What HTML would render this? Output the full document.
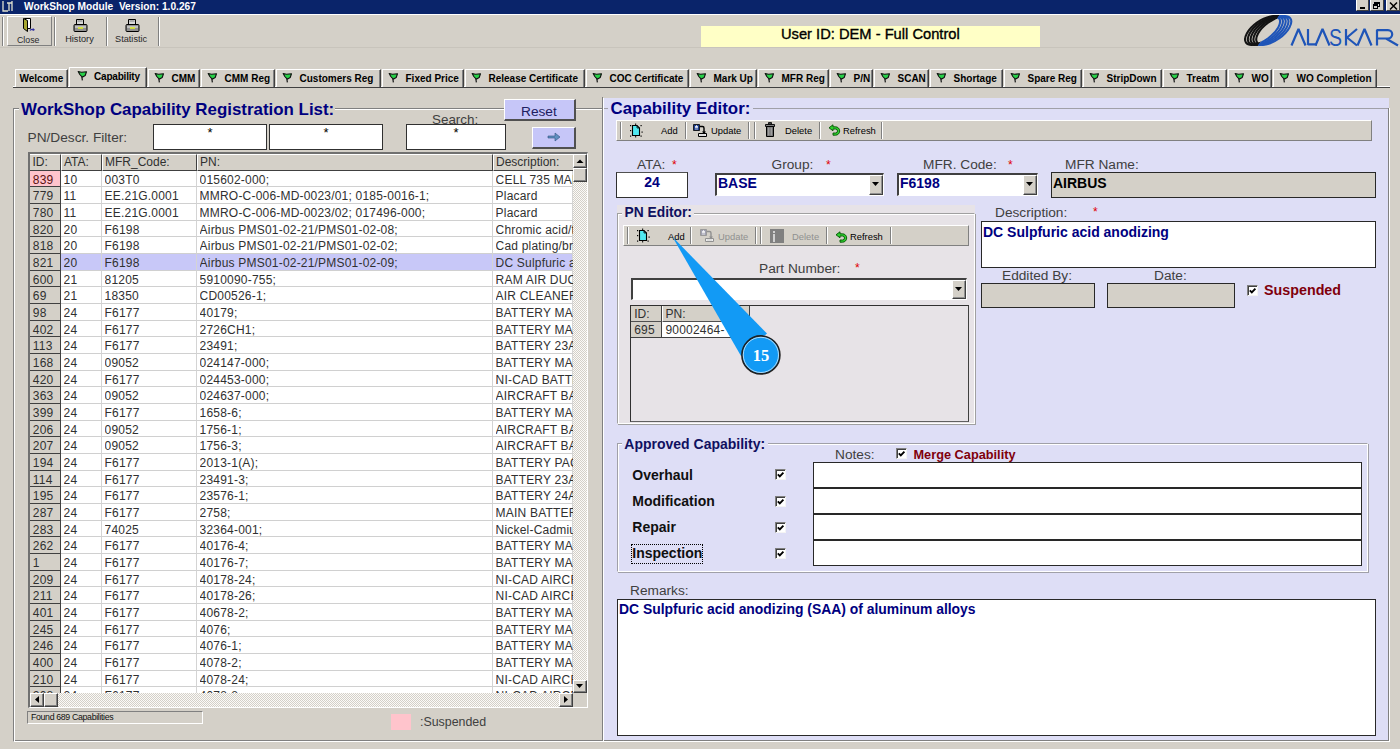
<!DOCTYPE html>
<html><head><meta charset="utf-8"><style>
html,body{margin:0;padding:0;width:1400px;height:749px;overflow:hidden;background:#d4d0c8;font-family:"Liberation Sans",sans-serif;}
.t{position:absolute;white-space:nowrap;line-height:normal;}
svg{overflow:visible}
</style></head><body>
<div style="position:absolute;left:0px;top:0px;width:1400px;height:14px;box-sizing:border-box;background:#0a246a"></div>
<div class="t" style="left:24px;top:0.77px;font-size:10.2px;font-weight:bold;color:#fff;">WorkShop Module&nbsp; Version: 1.0.267</div>
<svg style="position:absolute;left:1px;top:0px" width="14" height="13" viewBox="0 0 14 13"><path d="M2 1v10h5M8 3v8M6 3h5M11 1v10" fill="none" stroke="#e0e0d0" stroke-width="1.3"/></svg>
<div style="position:absolute;left:1356px;top:0px;width:13px;height:11px;box-sizing:border-box;background:#d4d0c8;border-right:1px solid #404040;border-bottom:1px solid #404040;border-left:1px solid #fff"></div>
<div style="position:absolute;left:1370px;top:0px;width:14px;height:11px;box-sizing:border-box;background:#d4d0c8;border-right:1px solid #404040;border-bottom:1px solid #404040;border-left:1px solid #fff"></div>
<div style="position:absolute;left:1386px;top:0px;width:14px;height:11px;box-sizing:border-box;background:#d4d0c8;border-right:1px solid #404040;border-bottom:1px solid #404040;border-left:1px solid #fff"></div>
<div style="position:absolute;left:1360px;top:7px;width:5px;height:2px;box-sizing:border-box;background:#000"></div>
<div style="position:absolute;left:1374px;top:2px;width:6px;height:5px;box-sizing:border-box;border:1px solid #000;border-top-width:2px"></div>
<div style="position:absolute;left:1373px;top:4px;width:5px;height:5px;box-sizing:border-box;background:#d4d0c8;border:1px solid #000;border-top-width:2px"></div>
<svg style="position:absolute;left:1389px;top:2px" width="9" height="8" viewBox="0 0 9 8"><path d="M1 0.5l7 7M8 0.5l-7 7" stroke="#000" stroke-width="1.5"/></svg>
<div style="position:absolute;left:0px;top:14px;width:1400px;height:34px;box-sizing:border-box;background:#d4d0c8;border-top:1px solid #fff;border-bottom:1px solid #808080"></div>
<div style="position:absolute;left:0px;top:47px;width:1400px;height:1px;box-sizing:border-box;background:#c8c4bc"></div>
<div style="position:absolute;left:2px;top:17px;width:2px;height:29px;box-sizing:border-box;border-left:1px solid #808080;border-right:1px solid #fff"></div>
<div style="position:absolute;left:7px;top:16px;width:45px;height:30px;box-sizing:border-box;border-top:1px solid #fff;border-left:1px solid #fff;border-right:1px solid #808080;border-bottom:1px solid #808080"></div>
<div style="position:absolute;left:54px;top:17px;width:2px;height:29px;box-sizing:border-box;border-left:1px solid #808080;border-right:1px solid #fff"></div>
<div style="position:absolute;left:106px;top:17px;width:2px;height:29px;box-sizing:border-box;border-left:1px solid #808080;border-right:1px solid #fff"></div>
<div style="position:absolute;left:158px;top:17px;width:2px;height:29px;box-sizing:border-box;border-left:1px solid #808080;border-right:1px solid #fff"></div>
<div class="t" style="left:17px;top:34.64px;font-size:8.8px;color:#282828;">Close</div>
<div class="t" style="left:65.2px;top:34.27px;font-size:9.2px;color:#282828;">History</div>
<div class="t" style="left:115px;top:34.27px;font-size:9.2px;color:#282828;">Statistic</div>
<svg style="position:absolute;left:20px;top:16px" width="18" height="18" viewBox="0 0 18 18"><path d="M4.5 2.5h6v10h-6z" fill="#fff" stroke="#000"/><path d="M3.5 2.5l4 2v11l-4-3z" fill="#a8a830" stroke="#000"/><path d="M10 14.5c1-1.5 3-1.5 4-0.5" fill="none" stroke="#3030a0" stroke-width="1.3"/><path d="M13 12l2 2-2.5 1z" fill="#3030a0"/></svg>
<svg style="position:absolute;left:73px;top:19px" width="15" height="13" viewBox="0 0 15 13"><path d="M3.5 0.5h7v5h-7z" fill="#d8d8d8" stroke="#000"/><path d="M4.5 2h5" stroke="#808080"/><path d="M1 6.5q0-1 1-1h11q1 0 1 1v5q0 1-1 1h-11q-1 0-1-1z" fill="#909090" stroke="#000"/><path d="M2 8h11" stroke="#f0f0f0"/><path d="M5 9h5" stroke="#e0f020" stroke-width="1.5"/></svg>
<svg style="position:absolute;left:125px;top:19px" width="15" height="13" viewBox="0 0 15 13"><path d="M3.5 0.5h7v5h-7z" fill="#d8d8d8" stroke="#000"/><path d="M4.5 2h5" stroke="#808080"/><path d="M1 6.5q0-1 1-1h11q1 0 1 1v5q0 1-1 1h-11q-1 0-1-1z" fill="#909090" stroke="#000"/><path d="M2 8h11" stroke="#f0f0f0"/><path d="M5 9h5" stroke="#e0f020" stroke-width="1.5"/></svg>
<div style="position:absolute;left:701px;top:26px;width:339px;height:21px;box-sizing:border-box;background:#ffffc6"></div>
<div class="t" style="left:781px;top:25.70px;font-size:14.7px;color:#000;-webkit-text-stroke:0.35px #000">User ID: DEM - Full Control</div>
<svg style="position:absolute;left:0;top:0" width="1400" height="60" viewBox="0 0 1400 60">
<defs><clipPath id="cb"><path d="M1253.5 52 L1288.2 3 L1300 3 L1300 60 Z"/></clipPath><clipPath id="ck"><path d="M1253.5 52 L1288.2 3 L1230 0 L1230 60 Z"/></clipPath></defs>
<g fill="none" stroke-width="2.1">
<g stroke="#141414" clip-path="url(#ck)"><ellipse cx="1262.5" cy="30.5" rx="20.5" ry="9.6" transform="rotate(-36 1262.5 30.4)"/><ellipse cx="1265.3" cy="30.5" rx="20.5" ry="9.6" transform="rotate(-36 1265.3 30.4)"/><ellipse cx="1268.1" cy="30.5" rx="20.5" ry="9.6" transform="rotate(-36 1268.1 30.4)"/><ellipse cx="1270.9" cy="30.5" rx="20.5" ry="9.6" transform="rotate(-36 1270.9 30.4)"/><ellipse cx="1273.7" cy="30.5" rx="20.5" ry="9.6" transform="rotate(-36 1273.7 30.4)"/></g>
<g stroke="#1f55b8" clip-path="url(#cb)"><ellipse cx="1262.5" cy="30.5" rx="20.5" ry="9.6" transform="rotate(-36 1262.5 30.4)"/><ellipse cx="1265.3" cy="30.5" rx="20.5" ry="9.6" transform="rotate(-36 1265.3 30.4)"/><ellipse cx="1268.1" cy="30.5" rx="20.5" ry="9.6" transform="rotate(-36 1268.1 30.4)"/><ellipse cx="1270.9" cy="30.5" rx="20.5" ry="9.6" transform="rotate(-36 1270.9 30.4)"/><ellipse cx="1273.7" cy="30.5" rx="20.5" ry="9.6" transform="rotate(-36 1273.7 30.4)"/></g>
</g>
<g fill="none" stroke="#1f55b8" stroke-width="2.2" stroke-linejoin="bevel">
<path d="M1291.5 45.5 L1298.5 29 L1305.5 45.5"/>
<path d="M1308 29 V44.4 H1317"/>
<path d="M1315.5 45.5 L1322.5 29 L1329.5 45.5"/>
<path d="M1346 29 V45.5 M1357 29 L1347 37.5 L1357 45.5"/>
<path d="M1357.5 45.5 L1364.5 29 L1371.5 45.5"/>
<path d="M1377 45.5 V30.1 H1388 A4.2 4.2 0 0 1 1388 38.5 H1377 M1386 38.5 L1398 45.5"/>
</g>
<text x="1329" y="45.5" font-family="Liberation Sans" font-size="23" fill="#1f55b8" textLength="13" lengthAdjust="spacingAndGlyphs">S</text>
</svg>
<div style="position:absolute;left:13px;top:86px;width:1377px;height:2px;box-sizing:border-box;border-top:1px solid #fff;border-bottom:1px solid #404040"></div>
<div style="position:absolute;left:15px;top:69px;width:53px;height:18px;box-sizing:border-box;background:#d4d0c8;border-top:1px solid #fff;border-left:1px solid #fff;border-right:1px solid #404040;box-shadow:inset -1px 0 #808080"></div>
<div class="t" style="left:19.5px;top:72.85px;font-size:10px;font-weight:bold;color:#000;">Welcome</div>
<div style="position:absolute;left:69px;top:67px;width:78px;height:20px;box-sizing:border-box;background:#d4d0c8;border-top:1px solid #fff;border-left:1px solid #fff;border-right:1px solid #404040;box-shadow:inset -1px 0 #808080"></div>
<svg style="position:absolute;left:77px;top:70px" width="11" height="11" viewBox="0 0 11 11"><path d="M1.2 1.5L4.5 2.2 9.5 1.8 8.2 5.5 5.2 7.2 2.8 4.5z" fill="#28d048" stroke="#101010" stroke-width="1.1" stroke-linejoin="round"/><path d="M4.8 6.5l0.6 3.8" stroke="#202020" stroke-width="1.3"/></svg>
<div class="t" style="left:94px;top:71.45px;font-size:10px;font-weight:bold;color:#000;letter-spacing:-0.2px">Capability</div>
<div style="position:absolute;left:148px;top:69px;width:52px;height:18px;box-sizing:border-box;background:#d4d0c8;border-top:1px solid #fff;border-left:1px solid #fff;border-right:1px solid #404040;box-shadow:inset -1px 0 #808080"></div>
<svg style="position:absolute;left:154px;top:72px" width="11" height="11" viewBox="0 0 11 11"><path d="M1.2 1.5L4.5 2.2 9.5 1.8 8.2 5.5 5.2 7.2 2.8 4.5z" fill="#28d048" stroke="#101010" stroke-width="1.1" stroke-linejoin="round"/><path d="M4.8 6.5l0.6 3.8" stroke="#202020" stroke-width="1.3"/></svg>
<div class="t" style="left:171.5px;top:72.85px;font-size:10px;font-weight:bold;color:#000;">CMM</div>
<div style="position:absolute;left:201px;top:69px;width:74px;height:18px;box-sizing:border-box;background:#d4d0c8;border-top:1px solid #fff;border-left:1px solid #fff;border-right:1px solid #404040;box-shadow:inset -1px 0 #808080"></div>
<svg style="position:absolute;left:207px;top:72px" width="11" height="11" viewBox="0 0 11 11"><path d="M1.2 1.5L4.5 2.2 9.5 1.8 8.2 5.5 5.2 7.2 2.8 4.5z" fill="#28d048" stroke="#101010" stroke-width="1.1" stroke-linejoin="round"/><path d="M4.8 6.5l0.6 3.8" stroke="#202020" stroke-width="1.3"/></svg>
<div class="t" style="left:224.5px;top:72.85px;font-size:10px;font-weight:bold;color:#000;">CMM Reg</div>
<div style="position:absolute;left:276px;top:69px;width:105px;height:18px;box-sizing:border-box;background:#d4d0c8;border-top:1px solid #fff;border-left:1px solid #fff;border-right:1px solid #404040;box-shadow:inset -1px 0 #808080"></div>
<svg style="position:absolute;left:282px;top:72px" width="11" height="11" viewBox="0 0 11 11"><path d="M1.2 1.5L4.5 2.2 9.5 1.8 8.2 5.5 5.2 7.2 2.8 4.5z" fill="#28d048" stroke="#101010" stroke-width="1.1" stroke-linejoin="round"/><path d="M4.8 6.5l0.6 3.8" stroke="#202020" stroke-width="1.3"/></svg>
<div class="t" style="left:299.5px;top:72.85px;font-size:10px;font-weight:bold;color:#000;">Customers Reg</div>
<div style="position:absolute;left:382px;top:69px;width:82px;height:18px;box-sizing:border-box;background:#d4d0c8;border-top:1px solid #fff;border-left:1px solid #fff;border-right:1px solid #404040;box-shadow:inset -1px 0 #808080"></div>
<svg style="position:absolute;left:388px;top:72px" width="11" height="11" viewBox="0 0 11 11"><path d="M1.2 1.5L4.5 2.2 9.5 1.8 8.2 5.5 5.2 7.2 2.8 4.5z" fill="#28d048" stroke="#101010" stroke-width="1.1" stroke-linejoin="round"/><path d="M4.8 6.5l0.6 3.8" stroke="#202020" stroke-width="1.3"/></svg>
<div class="t" style="left:405.5px;top:72.85px;font-size:10px;font-weight:bold;color:#000;">Fixed Price</div>
<div style="position:absolute;left:465px;top:69px;width:120px;height:18px;box-sizing:border-box;background:#d4d0c8;border-top:1px solid #fff;border-left:1px solid #fff;border-right:1px solid #404040;box-shadow:inset -1px 0 #808080"></div>
<svg style="position:absolute;left:471px;top:72px" width="11" height="11" viewBox="0 0 11 11"><path d="M1.2 1.5L4.5 2.2 9.5 1.8 8.2 5.5 5.2 7.2 2.8 4.5z" fill="#28d048" stroke="#101010" stroke-width="1.1" stroke-linejoin="round"/><path d="M4.8 6.5l0.6 3.8" stroke="#202020" stroke-width="1.3"/></svg>
<div class="t" style="left:488.5px;top:72.85px;font-size:10px;font-weight:bold;color:#000;">Release Certificate</div>
<div style="position:absolute;left:586px;top:69px;width:103px;height:18px;box-sizing:border-box;background:#d4d0c8;border-top:1px solid #fff;border-left:1px solid #fff;border-right:1px solid #404040;box-shadow:inset -1px 0 #808080"></div>
<svg style="position:absolute;left:592px;top:72px" width="11" height="11" viewBox="0 0 11 11"><path d="M1.2 1.5L4.5 2.2 9.5 1.8 8.2 5.5 5.2 7.2 2.8 4.5z" fill="#28d048" stroke="#101010" stroke-width="1.1" stroke-linejoin="round"/><path d="M4.8 6.5l0.6 3.8" stroke="#202020" stroke-width="1.3"/></svg>
<div class="t" style="left:609.5px;top:72.85px;font-size:10px;font-weight:bold;color:#000;">COC Certificate</div>
<div style="position:absolute;left:690px;top:69px;width:67px;height:18px;box-sizing:border-box;background:#d4d0c8;border-top:1px solid #fff;border-left:1px solid #fff;border-right:1px solid #404040;box-shadow:inset -1px 0 #808080"></div>
<svg style="position:absolute;left:696px;top:72px" width="11" height="11" viewBox="0 0 11 11"><path d="M1.2 1.5L4.5 2.2 9.5 1.8 8.2 5.5 5.2 7.2 2.8 4.5z" fill="#28d048" stroke="#101010" stroke-width="1.1" stroke-linejoin="round"/><path d="M4.8 6.5l0.6 3.8" stroke="#202020" stroke-width="1.3"/></svg>
<div class="t" style="left:713.5px;top:72.85px;font-size:10px;font-weight:bold;color:#000;">Mark Up</div>
<div style="position:absolute;left:758px;top:69px;width:71px;height:18px;box-sizing:border-box;background:#d4d0c8;border-top:1px solid #fff;border-left:1px solid #fff;border-right:1px solid #404040;box-shadow:inset -1px 0 #808080"></div>
<svg style="position:absolute;left:764px;top:72px" width="11" height="11" viewBox="0 0 11 11"><path d="M1.2 1.5L4.5 2.2 9.5 1.8 8.2 5.5 5.2 7.2 2.8 4.5z" fill="#28d048" stroke="#101010" stroke-width="1.1" stroke-linejoin="round"/><path d="M4.8 6.5l0.6 3.8" stroke="#202020" stroke-width="1.3"/></svg>
<div class="t" style="left:781.5px;top:72.85px;font-size:10px;font-weight:bold;color:#000;">MFR Reg</div>
<div style="position:absolute;left:830px;top:69px;width:43px;height:18px;box-sizing:border-box;background:#d4d0c8;border-top:1px solid #fff;border-left:1px solid #fff;border-right:1px solid #404040;box-shadow:inset -1px 0 #808080"></div>
<svg style="position:absolute;left:836px;top:72px" width="11" height="11" viewBox="0 0 11 11"><path d="M1.2 1.5L4.5 2.2 9.5 1.8 8.2 5.5 5.2 7.2 2.8 4.5z" fill="#28d048" stroke="#101010" stroke-width="1.1" stroke-linejoin="round"/><path d="M4.8 6.5l0.6 3.8" stroke="#202020" stroke-width="1.3"/></svg>
<div class="t" style="left:853.5px;top:72.85px;font-size:10px;font-weight:bold;color:#000;">P/N</div>
<div style="position:absolute;left:874px;top:69px;width:55px;height:18px;box-sizing:border-box;background:#d4d0c8;border-top:1px solid #fff;border-left:1px solid #fff;border-right:1px solid #404040;box-shadow:inset -1px 0 #808080"></div>
<svg style="position:absolute;left:880px;top:72px" width="11" height="11" viewBox="0 0 11 11"><path d="M1.2 1.5L4.5 2.2 9.5 1.8 8.2 5.5 5.2 7.2 2.8 4.5z" fill="#28d048" stroke="#101010" stroke-width="1.1" stroke-linejoin="round"/><path d="M4.8 6.5l0.6 3.8" stroke="#202020" stroke-width="1.3"/></svg>
<div class="t" style="left:897.5px;top:72.85px;font-size:10px;font-weight:bold;color:#000;">SCAN</div>
<div style="position:absolute;left:930px;top:69px;width:73px;height:18px;box-sizing:border-box;background:#d4d0c8;border-top:1px solid #fff;border-left:1px solid #fff;border-right:1px solid #404040;box-shadow:inset -1px 0 #808080"></div>
<svg style="position:absolute;left:936px;top:72px" width="11" height="11" viewBox="0 0 11 11"><path d="M1.2 1.5L4.5 2.2 9.5 1.8 8.2 5.5 5.2 7.2 2.8 4.5z" fill="#28d048" stroke="#101010" stroke-width="1.1" stroke-linejoin="round"/><path d="M4.8 6.5l0.6 3.8" stroke="#202020" stroke-width="1.3"/></svg>
<div class="t" style="left:953.5px;top:72.85px;font-size:10px;font-weight:bold;color:#000;">Shortage</div>
<div style="position:absolute;left:1004px;top:69px;width:78px;height:18px;box-sizing:border-box;background:#d4d0c8;border-top:1px solid #fff;border-left:1px solid #fff;border-right:1px solid #404040;box-shadow:inset -1px 0 #808080"></div>
<svg style="position:absolute;left:1010px;top:72px" width="11" height="11" viewBox="0 0 11 11"><path d="M1.2 1.5L4.5 2.2 9.5 1.8 8.2 5.5 5.2 7.2 2.8 4.5z" fill="#28d048" stroke="#101010" stroke-width="1.1" stroke-linejoin="round"/><path d="M4.8 6.5l0.6 3.8" stroke="#202020" stroke-width="1.3"/></svg>
<div class="t" style="left:1027.5px;top:72.85px;font-size:10px;font-weight:bold;color:#000;">Spare Reg</div>
<div style="position:absolute;left:1083px;top:69px;width:79px;height:18px;box-sizing:border-box;background:#d4d0c8;border-top:1px solid #fff;border-left:1px solid #fff;border-right:1px solid #404040;box-shadow:inset -1px 0 #808080"></div>
<svg style="position:absolute;left:1089px;top:72px" width="11" height="11" viewBox="0 0 11 11"><path d="M1.2 1.5L4.5 2.2 9.5 1.8 8.2 5.5 5.2 7.2 2.8 4.5z" fill="#28d048" stroke="#101010" stroke-width="1.1" stroke-linejoin="round"/><path d="M4.8 6.5l0.6 3.8" stroke="#202020" stroke-width="1.3"/></svg>
<div class="t" style="left:1106.5px;top:72.85px;font-size:10px;font-weight:bold;color:#000;">StripDown</div>
<div style="position:absolute;left:1163px;top:69px;width:64px;height:18px;box-sizing:border-box;background:#d4d0c8;border-top:1px solid #fff;border-left:1px solid #fff;border-right:1px solid #404040;box-shadow:inset -1px 0 #808080"></div>
<svg style="position:absolute;left:1169px;top:72px" width="11" height="11" viewBox="0 0 11 11"><path d="M1.2 1.5L4.5 2.2 9.5 1.8 8.2 5.5 5.2 7.2 2.8 4.5z" fill="#28d048" stroke="#101010" stroke-width="1.1" stroke-linejoin="round"/><path d="M4.8 6.5l0.6 3.8" stroke="#202020" stroke-width="1.3"/></svg>
<div class="t" style="left:1186.5px;top:72.85px;font-size:10px;font-weight:bold;color:#000;">Treatm</div>
<div style="position:absolute;left:1228px;top:69px;width:44px;height:18px;box-sizing:border-box;background:#d4d0c8;border-top:1px solid #fff;border-left:1px solid #fff;border-right:1px solid #404040;box-shadow:inset -1px 0 #808080"></div>
<svg style="position:absolute;left:1234px;top:72px" width="11" height="11" viewBox="0 0 11 11"><path d="M1.2 1.5L4.5 2.2 9.5 1.8 8.2 5.5 5.2 7.2 2.8 4.5z" fill="#28d048" stroke="#101010" stroke-width="1.1" stroke-linejoin="round"/><path d="M4.8 6.5l0.6 3.8" stroke="#202020" stroke-width="1.3"/></svg>
<div class="t" style="left:1251.5px;top:72.85px;font-size:10px;font-weight:bold;color:#000;">WO</div>
<div style="position:absolute;left:1273px;top:69px;width:104px;height:18px;box-sizing:border-box;background:#d4d0c8;border-top:1px solid #fff;border-left:1px solid #fff;border-right:1px solid #404040;box-shadow:inset -1px 0 #808080"></div>
<svg style="position:absolute;left:1279px;top:72px" width="11" height="11" viewBox="0 0 11 11"><path d="M1.2 1.5L4.5 2.2 9.5 1.8 8.2 5.5 5.2 7.2 2.8 4.5z" fill="#28d048" stroke="#101010" stroke-width="1.1" stroke-linejoin="round"/><path d="M4.8 6.5l0.6 3.8" stroke="#202020" stroke-width="1.3"/></svg>
<div class="t" style="left:1296.5px;top:72.85px;font-size:10px;font-weight:bold;color:#000;">WO Completion</div>
<div style="position:absolute;left:13px;top:108px;width:591px;height:634px;box-sizing:border-box;border-top:1px solid #808080;border-left:1px solid #808080;border-right:1px solid #fff;border-bottom:1px solid #fff;box-shadow:inset 1px 1px #fff, inset -1px -1px #808080"></div>
<div style="position:absolute;left:19px;top:100px;width:316px;height:16px;box-sizing:border-box;background:#d4d0c8"></div>
<div class="t" style="left:21.1px;top:99.51px;font-size:16.9px;font-weight:bold;color:#000080;">WorkShop Capability Registration List:</div>
<div class="t" style="left:27.5px;top:129.60px;font-size:13.7px;color:#404040;">PN/Descr. Filter:</div>
<div class="t" style="left:432px;top:111.87px;font-size:13.4px;color:#404040;">Search:</div>
<div style="position:absolute;left:153px;top:124px;width:114px;height:26px;box-sizing:border-box;background:#fff;border:1px solid #303030"></div>
<div class="t" style="left:153px;width:114px;top:125px;text-align:center;font-size:13px;color:#000">*</div>
<div style="position:absolute;left:269px;top:124px;width:114px;height:26px;box-sizing:border-box;background:#fff;border:1px solid #303030"></div>
<div class="t" style="left:269px;width:114px;top:125px;text-align:center;font-size:13px;color:#000">*</div>
<div style="position:absolute;left:406px;top:124px;width:100px;height:26px;box-sizing:border-box;background:#fff;border:1px solid #303030"></div>
<div class="t" style="left:406px;width:100px;top:125px;text-align:center;font-size:13px;color:#000">*</div>
<div style="position:absolute;left:504px;top:99px;width:72px;height:22px;box-sizing:border-box;background:#c6c6f8;border-top:1px solid #fff;border-left:1px solid #fff;border-right:2px solid #505050;border-bottom:2px solid #505050"></div>
<div class="t" style="left:521px;top:103.60px;font-size:13.7px;color:#202060;">Reset</div>
<div style="position:absolute;left:532px;top:127px;width:44px;height:22px;box-sizing:border-box;background:#c6c6f8;border-top:1px solid #fff;border-left:1px solid #fff;border-right:2px solid #505050;border-bottom:2px solid #505050"></div>
<svg style="position:absolute;left:547px;top:132px" width="14" height="10" viewBox="0 0 14 10"><path d="M1 4h7V1l5 4-5 4V6H1z" fill="#6090c0" stroke="#305080" stroke-width="0.6"/></svg>
<div style="position:absolute;left:28px;top:152px;width:560px;height:556px;box-sizing:border-box;background:#d4d0c8;border-top:2px solid #707070;border-left:2px solid #707070;border-right:1px solid #fff;border-bottom:1px solid #fff"></div>
<div style="position:absolute;left:30px;top:154px;width:543px;height:539px;overflow:hidden;background:#fff">
<div style="position:absolute;left:0px;top:0px;width:543px;height:17px;box-sizing:border-box;background:#d4d0c8"></div>
<div style="position:absolute;left:0px;top:0px;width:31px;height:17px;box-sizing:border-box;border-top:1px solid #fff;border-right:1px solid #404040;border-bottom:1px solid #404040"></div>
<div class="t" style="left:2.5px;top:1.44px;font-size:12px;color:#303030;">ID:</div>
<div style="position:absolute;left:31px;top:0px;width:41px;height:17px;box-sizing:border-box;border-top:1px solid #fff;border-left:1px solid #fff;border-bottom:1px solid #404040;border-right:1px solid #404040"></div>
<div class="t" style="left:34px;top:1.44px;font-size:12px;color:#303030;">ATA:</div>
<div style="position:absolute;left:72px;top:0px;width:95px;height:17px;box-sizing:border-box;border-top:1px solid #fff;border-left:1px solid #fff;border-bottom:1px solid #404040;border-right:1px solid #404040"></div>
<div class="t" style="left:75px;top:1.44px;font-size:12px;color:#303030;">MFR_Code:</div>
<div style="position:absolute;left:167px;top:0px;width:296px;height:17px;box-sizing:border-box;border-top:1px solid #fff;border-left:1px solid #fff;border-bottom:1px solid #404040;border-right:1px solid #404040"></div>
<div class="t" style="left:170px;top:1.44px;font-size:12px;color:#303030;">PN:</div>
<div style="position:absolute;left:463px;top:0px;width:80px;height:17px;box-sizing:border-box;border-top:1px solid #fff;border-left:1px solid #fff;border-bottom:1px solid #404040"></div>
<div class="t" style="left:466px;top:1.44px;font-size:12px;color:#303030;">Description:</div>
<div style="position:absolute;left:31px;top:17px;width:512px;height:16px;box-sizing:border-box;background:#fff"></div>
<div style="position:absolute;left:0px;top:17px;width:31px;height:16px;box-sizing:border-box;background:#ffc4cc;border-bottom:1px solid #404040;border-right:1px solid #404040"></div>
<div style="position:absolute;left:31px;top:17px;width:41px;height:16px;box-sizing:border-box;border-right:1px solid #d4d4d4;border-bottom:1px solid #d0d0d0"></div>
<div style="position:absolute;left:72px;top:17px;width:95px;height:16px;box-sizing:border-box;border-right:1px solid #d4d4d4;border-bottom:1px solid #d0d0d0"></div>
<div style="position:absolute;left:167px;top:17px;width:296px;height:16px;box-sizing:border-box;border-right:1px solid #d4d4d4;border-bottom:1px solid #d0d0d0"></div>
<div style="position:absolute;left:463px;top:17px;width:80px;height:16px;box-sizing:border-box;border-right:1px solid #d4d4d4;border-bottom:1px solid #d0d0d0"></div>
<div class="t" style="left:2.799999999999997px;top:18.64px;font-size:12px;color:#5a1010;letter-spacing:0.2px">839</div>
<div class="t" style="left:33.6px;top:18.64px;font-size:12px;color:#303030;width:38px;overflow:hidden;letter-spacing:0.2px">10</div>
<div class="t" style="left:74.6px;top:18.64px;font-size:12px;color:#303030;width:92px;overflow:hidden;letter-spacing:0.2px">003T0</div>
<div class="t" style="left:169.6px;top:18.64px;font-size:12px;color:#303030;width:293px;overflow:hidden;letter-spacing:0.2px">015602-000;</div>
<div class="t" style="left:465.6px;top:18.64px;font-size:12px;color:#303030;width:77px;overflow:hidden;letter-spacing:0.2px">CELL 735 MAI</div>
<div style="position:absolute;left:31px;top:33px;width:512px;height:17px;box-sizing:border-box;background:#fff"></div>
<div style="position:absolute;left:0px;top:33px;width:31px;height:17px;box-sizing:border-box;background:#d4d0c8;border-bottom:1px solid #404040;border-right:1px solid #404040"></div>
<div style="position:absolute;left:31px;top:33px;width:41px;height:17px;box-sizing:border-box;border-right:1px solid #d4d4d4;border-bottom:1px solid #d0d0d0"></div>
<div style="position:absolute;left:72px;top:33px;width:95px;height:17px;box-sizing:border-box;border-right:1px solid #d4d4d4;border-bottom:1px solid #d0d0d0"></div>
<div style="position:absolute;left:167px;top:33px;width:296px;height:17px;box-sizing:border-box;border-right:1px solid #d4d4d4;border-bottom:1px solid #d0d0d0"></div>
<div style="position:absolute;left:463px;top:33px;width:80px;height:17px;box-sizing:border-box;border-right:1px solid #d4d4d4;border-bottom:1px solid #d0d0d0"></div>
<div class="t" style="left:2.799999999999997px;top:34.64px;font-size:12px;color:#303030;letter-spacing:0.2px">779</div>
<div class="t" style="left:33.6px;top:34.64px;font-size:12px;color:#303030;width:38px;overflow:hidden;letter-spacing:0.2px">11</div>
<div class="t" style="left:74.6px;top:34.64px;font-size:12px;color:#303030;width:92px;overflow:hidden;letter-spacing:0.2px">EE.21G.0001</div>
<div class="t" style="left:169.6px;top:34.64px;font-size:12px;color:#303030;width:293px;overflow:hidden;letter-spacing:0.2px">MMRO-C-006-MD-0023/01; 0185-0016-1;</div>
<div class="t" style="left:465.6px;top:34.64px;font-size:12px;color:#303030;width:77px;overflow:hidden;letter-spacing:0.2px">Placard</div>
<div style="position:absolute;left:31px;top:50px;width:512px;height:17px;box-sizing:border-box;background:#fff"></div>
<div style="position:absolute;left:0px;top:50px;width:31px;height:17px;box-sizing:border-box;background:#d4d0c8;border-bottom:1px solid #404040;border-right:1px solid #404040"></div>
<div style="position:absolute;left:31px;top:50px;width:41px;height:17px;box-sizing:border-box;border-right:1px solid #d4d4d4;border-bottom:1px solid #d0d0d0"></div>
<div style="position:absolute;left:72px;top:50px;width:95px;height:17px;box-sizing:border-box;border-right:1px solid #d4d4d4;border-bottom:1px solid #d0d0d0"></div>
<div style="position:absolute;left:167px;top:50px;width:296px;height:17px;box-sizing:border-box;border-right:1px solid #d4d4d4;border-bottom:1px solid #d0d0d0"></div>
<div style="position:absolute;left:463px;top:50px;width:80px;height:17px;box-sizing:border-box;border-right:1px solid #d4d4d4;border-bottom:1px solid #d0d0d0"></div>
<div class="t" style="left:2.799999999999997px;top:51.64px;font-size:12px;color:#303030;letter-spacing:0.2px">780</div>
<div class="t" style="left:33.6px;top:51.64px;font-size:12px;color:#303030;width:38px;overflow:hidden;letter-spacing:0.2px">11</div>
<div class="t" style="left:74.6px;top:51.64px;font-size:12px;color:#303030;width:92px;overflow:hidden;letter-spacing:0.2px">EE.21G.0001</div>
<div class="t" style="left:169.6px;top:51.64px;font-size:12px;color:#303030;width:293px;overflow:hidden;letter-spacing:0.2px">MMRO-C-006-MD-0023/02; 017496-000;</div>
<div class="t" style="left:465.6px;top:51.64px;font-size:12px;color:#303030;width:77px;overflow:hidden;letter-spacing:0.2px">Placard</div>
<div style="position:absolute;left:31px;top:67px;width:512px;height:16px;box-sizing:border-box;background:#fff"></div>
<div style="position:absolute;left:0px;top:67px;width:31px;height:16px;box-sizing:border-box;background:#d4d0c8;border-bottom:1px solid #404040;border-right:1px solid #404040"></div>
<div style="position:absolute;left:31px;top:67px;width:41px;height:16px;box-sizing:border-box;border-right:1px solid #d4d4d4;border-bottom:1px solid #d0d0d0"></div>
<div style="position:absolute;left:72px;top:67px;width:95px;height:16px;box-sizing:border-box;border-right:1px solid #d4d4d4;border-bottom:1px solid #d0d0d0"></div>
<div style="position:absolute;left:167px;top:67px;width:296px;height:16px;box-sizing:border-box;border-right:1px solid #d4d4d4;border-bottom:1px solid #d0d0d0"></div>
<div style="position:absolute;left:463px;top:67px;width:80px;height:16px;box-sizing:border-box;border-right:1px solid #d4d4d4;border-bottom:1px solid #d0d0d0"></div>
<div class="t" style="left:2.799999999999997px;top:68.64px;font-size:12px;color:#303030;letter-spacing:0.2px">820</div>
<div class="t" style="left:33.6px;top:68.64px;font-size:12px;color:#303030;width:38px;overflow:hidden;letter-spacing:0.2px">20</div>
<div class="t" style="left:74.6px;top:68.64px;font-size:12px;color:#303030;width:92px;overflow:hidden;letter-spacing:0.2px">F6198</div>
<div class="t" style="left:169.6px;top:68.64px;font-size:12px;color:#303030;width:293px;overflow:hidden;letter-spacing:0.2px">Airbus PMS01-02-21/PMS01-02-08;</div>
<div class="t" style="left:465.6px;top:68.64px;font-size:12px;color:#303030;width:77px;overflow:hidden;letter-spacing:0.2px">Chromic acid/t</div>
<div style="position:absolute;left:31px;top:83px;width:512px;height:17px;box-sizing:border-box;background:#fff"></div>
<div style="position:absolute;left:0px;top:83px;width:31px;height:17px;box-sizing:border-box;background:#d4d0c8;border-bottom:1px solid #404040;border-right:1px solid #404040"></div>
<div style="position:absolute;left:31px;top:83px;width:41px;height:17px;box-sizing:border-box;border-right:1px solid #d4d4d4;border-bottom:1px solid #d0d0d0"></div>
<div style="position:absolute;left:72px;top:83px;width:95px;height:17px;box-sizing:border-box;border-right:1px solid #d4d4d4;border-bottom:1px solid #d0d0d0"></div>
<div style="position:absolute;left:167px;top:83px;width:296px;height:17px;box-sizing:border-box;border-right:1px solid #d4d4d4;border-bottom:1px solid #d0d0d0"></div>
<div style="position:absolute;left:463px;top:83px;width:80px;height:17px;box-sizing:border-box;border-right:1px solid #d4d4d4;border-bottom:1px solid #d0d0d0"></div>
<div class="t" style="left:2.799999999999997px;top:84.64px;font-size:12px;color:#303030;letter-spacing:0.2px">818</div>
<div class="t" style="left:33.6px;top:84.64px;font-size:12px;color:#303030;width:38px;overflow:hidden;letter-spacing:0.2px">20</div>
<div class="t" style="left:74.6px;top:84.64px;font-size:12px;color:#303030;width:92px;overflow:hidden;letter-spacing:0.2px">F6198</div>
<div class="t" style="left:169.6px;top:84.64px;font-size:12px;color:#303030;width:293px;overflow:hidden;letter-spacing:0.2px">Airbus PMS01-02-21/PMS01-02-02;</div>
<div class="t" style="left:465.6px;top:84.64px;font-size:12px;color:#303030;width:77px;overflow:hidden;letter-spacing:0.2px">Cad plating/br</div>
<div style="position:absolute;left:31px;top:100px;width:512px;height:17px;box-sizing:border-box;background:#c8c8f8"></div>
<div style="position:absolute;left:0px;top:100px;width:31px;height:17px;box-sizing:border-box;background:#d4d0c8;border-bottom:1px solid #404040;border-right:1px solid #404040"></div>
<div style="position:absolute;left:31px;top:100px;width:41px;height:17px;box-sizing:border-box;border-right:1px solid #d4d4d4;border-bottom:1px solid #d0d0d0"></div>
<div style="position:absolute;left:72px;top:100px;width:95px;height:17px;box-sizing:border-box;border-right:1px solid #d4d4d4;border-bottom:1px solid #d0d0d0"></div>
<div style="position:absolute;left:167px;top:100px;width:296px;height:17px;box-sizing:border-box;border-right:1px solid #d4d4d4;border-bottom:1px solid #d0d0d0"></div>
<div style="position:absolute;left:463px;top:100px;width:80px;height:17px;box-sizing:border-box;border-right:1px solid #d4d4d4;border-bottom:1px solid #d0d0d0"></div>
<div class="t" style="left:2.799999999999997px;top:101.64px;font-size:12px;color:#303030;letter-spacing:0.2px">821</div>
<div class="t" style="left:33.6px;top:101.64px;font-size:12px;color:#303030;width:38px;overflow:hidden;letter-spacing:0.2px">20</div>
<div class="t" style="left:74.6px;top:101.64px;font-size:12px;color:#303030;width:92px;overflow:hidden;letter-spacing:0.2px">F6198</div>
<div class="t" style="left:169.6px;top:101.64px;font-size:12px;color:#303030;width:293px;overflow:hidden;letter-spacing:0.2px">Airbus PMS01-02-21/PMS01-02-09;</div>
<div class="t" style="left:465.6px;top:101.64px;font-size:12px;color:#303030;width:77px;overflow:hidden;letter-spacing:0.2px">DC Sulpfuric a</div>
<div style="position:absolute;left:31px;top:117px;width:512px;height:16px;box-sizing:border-box;background:#fff"></div>
<div style="position:absolute;left:0px;top:117px;width:31px;height:16px;box-sizing:border-box;background:#d4d0c8;border-bottom:1px solid #404040;border-right:1px solid #404040"></div>
<div style="position:absolute;left:31px;top:117px;width:41px;height:16px;box-sizing:border-box;border-right:1px solid #d4d4d4;border-bottom:1px solid #d0d0d0"></div>
<div style="position:absolute;left:72px;top:117px;width:95px;height:16px;box-sizing:border-box;border-right:1px solid #d4d4d4;border-bottom:1px solid #d0d0d0"></div>
<div style="position:absolute;left:167px;top:117px;width:296px;height:16px;box-sizing:border-box;border-right:1px solid #d4d4d4;border-bottom:1px solid #d0d0d0"></div>
<div style="position:absolute;left:463px;top:117px;width:80px;height:16px;box-sizing:border-box;border-right:1px solid #d4d4d4;border-bottom:1px solid #d0d0d0"></div>
<div class="t" style="left:2.799999999999997px;top:118.64px;font-size:12px;color:#303030;letter-spacing:0.2px">600</div>
<div class="t" style="left:33.6px;top:118.64px;font-size:12px;color:#303030;width:38px;overflow:hidden;letter-spacing:0.2px">21</div>
<div class="t" style="left:74.6px;top:118.64px;font-size:12px;color:#303030;width:92px;overflow:hidden;letter-spacing:0.2px">81205</div>
<div class="t" style="left:169.6px;top:118.64px;font-size:12px;color:#303030;width:293px;overflow:hidden;letter-spacing:0.2px">5910090-755;</div>
<div class="t" style="left:465.6px;top:118.64px;font-size:12px;color:#303030;width:77px;overflow:hidden;letter-spacing:0.2px">RAM AIR DUC</div>
<div style="position:absolute;left:31px;top:133px;width:512px;height:17px;box-sizing:border-box;background:#fff"></div>
<div style="position:absolute;left:0px;top:133px;width:31px;height:17px;box-sizing:border-box;background:#d4d0c8;border-bottom:1px solid #404040;border-right:1px solid #404040"></div>
<div style="position:absolute;left:31px;top:133px;width:41px;height:17px;box-sizing:border-box;border-right:1px solid #d4d4d4;border-bottom:1px solid #d0d0d0"></div>
<div style="position:absolute;left:72px;top:133px;width:95px;height:17px;box-sizing:border-box;border-right:1px solid #d4d4d4;border-bottom:1px solid #d0d0d0"></div>
<div style="position:absolute;left:167px;top:133px;width:296px;height:17px;box-sizing:border-box;border-right:1px solid #d4d4d4;border-bottom:1px solid #d0d0d0"></div>
<div style="position:absolute;left:463px;top:133px;width:80px;height:17px;box-sizing:border-box;border-right:1px solid #d4d4d4;border-bottom:1px solid #d0d0d0"></div>
<div class="t" style="left:2.799999999999997px;top:134.64px;font-size:12px;color:#303030;letter-spacing:0.2px">69</div>
<div class="t" style="left:33.6px;top:134.64px;font-size:12px;color:#303030;width:38px;overflow:hidden;letter-spacing:0.2px">21</div>
<div class="t" style="left:74.6px;top:134.64px;font-size:12px;color:#303030;width:92px;overflow:hidden;letter-spacing:0.2px">18350</div>
<div class="t" style="left:169.6px;top:134.64px;font-size:12px;color:#303030;width:293px;overflow:hidden;letter-spacing:0.2px">CD00526-1;</div>
<div class="t" style="left:465.6px;top:134.64px;font-size:12px;color:#303030;width:77px;overflow:hidden;letter-spacing:0.2px">AIR CLEANER</div>
<div style="position:absolute;left:31px;top:150px;width:512px;height:17px;box-sizing:border-box;background:#fff"></div>
<div style="position:absolute;left:0px;top:150px;width:31px;height:17px;box-sizing:border-box;background:#d4d0c8;border-bottom:1px solid #404040;border-right:1px solid #404040"></div>
<div style="position:absolute;left:31px;top:150px;width:41px;height:17px;box-sizing:border-box;border-right:1px solid #d4d4d4;border-bottom:1px solid #d0d0d0"></div>
<div style="position:absolute;left:72px;top:150px;width:95px;height:17px;box-sizing:border-box;border-right:1px solid #d4d4d4;border-bottom:1px solid #d0d0d0"></div>
<div style="position:absolute;left:167px;top:150px;width:296px;height:17px;box-sizing:border-box;border-right:1px solid #d4d4d4;border-bottom:1px solid #d0d0d0"></div>
<div style="position:absolute;left:463px;top:150px;width:80px;height:17px;box-sizing:border-box;border-right:1px solid #d4d4d4;border-bottom:1px solid #d0d0d0"></div>
<div class="t" style="left:2.799999999999997px;top:151.64px;font-size:12px;color:#303030;letter-spacing:0.2px">98</div>
<div class="t" style="left:33.6px;top:151.64px;font-size:12px;color:#303030;width:38px;overflow:hidden;letter-spacing:0.2px">24</div>
<div class="t" style="left:74.6px;top:151.64px;font-size:12px;color:#303030;width:92px;overflow:hidden;letter-spacing:0.2px">F6177</div>
<div class="t" style="left:169.6px;top:151.64px;font-size:12px;color:#303030;width:293px;overflow:hidden;letter-spacing:0.2px">40179;</div>
<div class="t" style="left:465.6px;top:151.64px;font-size:12px;color:#303030;width:77px;overflow:hidden;letter-spacing:0.2px">BATTERY MAI</div>
<div style="position:absolute;left:31px;top:167px;width:512px;height:16px;box-sizing:border-box;background:#fff"></div>
<div style="position:absolute;left:0px;top:167px;width:31px;height:16px;box-sizing:border-box;background:#d4d0c8;border-bottom:1px solid #404040;border-right:1px solid #404040"></div>
<div style="position:absolute;left:31px;top:167px;width:41px;height:16px;box-sizing:border-box;border-right:1px solid #d4d4d4;border-bottom:1px solid #d0d0d0"></div>
<div style="position:absolute;left:72px;top:167px;width:95px;height:16px;box-sizing:border-box;border-right:1px solid #d4d4d4;border-bottom:1px solid #d0d0d0"></div>
<div style="position:absolute;left:167px;top:167px;width:296px;height:16px;box-sizing:border-box;border-right:1px solid #d4d4d4;border-bottom:1px solid #d0d0d0"></div>
<div style="position:absolute;left:463px;top:167px;width:80px;height:16px;box-sizing:border-box;border-right:1px solid #d4d4d4;border-bottom:1px solid #d0d0d0"></div>
<div class="t" style="left:2.799999999999997px;top:168.64px;font-size:12px;color:#303030;letter-spacing:0.2px">402</div>
<div class="t" style="left:33.6px;top:168.64px;font-size:12px;color:#303030;width:38px;overflow:hidden;letter-spacing:0.2px">24</div>
<div class="t" style="left:74.6px;top:168.64px;font-size:12px;color:#303030;width:92px;overflow:hidden;letter-spacing:0.2px">F6177</div>
<div class="t" style="left:169.6px;top:168.64px;font-size:12px;color:#303030;width:293px;overflow:hidden;letter-spacing:0.2px">2726CH1;</div>
<div class="t" style="left:465.6px;top:168.64px;font-size:12px;color:#303030;width:77px;overflow:hidden;letter-spacing:0.2px">BATTERY MAI</div>
<div style="position:absolute;left:31px;top:183px;width:512px;height:17px;box-sizing:border-box;background:#fff"></div>
<div style="position:absolute;left:0px;top:183px;width:31px;height:17px;box-sizing:border-box;background:#d4d0c8;border-bottom:1px solid #404040;border-right:1px solid #404040"></div>
<div style="position:absolute;left:31px;top:183px;width:41px;height:17px;box-sizing:border-box;border-right:1px solid #d4d4d4;border-bottom:1px solid #d0d0d0"></div>
<div style="position:absolute;left:72px;top:183px;width:95px;height:17px;box-sizing:border-box;border-right:1px solid #d4d4d4;border-bottom:1px solid #d0d0d0"></div>
<div style="position:absolute;left:167px;top:183px;width:296px;height:17px;box-sizing:border-box;border-right:1px solid #d4d4d4;border-bottom:1px solid #d0d0d0"></div>
<div style="position:absolute;left:463px;top:183px;width:80px;height:17px;box-sizing:border-box;border-right:1px solid #d4d4d4;border-bottom:1px solid #d0d0d0"></div>
<div class="t" style="left:2.799999999999997px;top:184.64px;font-size:12px;color:#303030;letter-spacing:0.2px">113</div>
<div class="t" style="left:33.6px;top:184.64px;font-size:12px;color:#303030;width:38px;overflow:hidden;letter-spacing:0.2px">24</div>
<div class="t" style="left:74.6px;top:184.64px;font-size:12px;color:#303030;width:92px;overflow:hidden;letter-spacing:0.2px">F6177</div>
<div class="t" style="left:169.6px;top:184.64px;font-size:12px;color:#303030;width:293px;overflow:hidden;letter-spacing:0.2px">23491;</div>
<div class="t" style="left:465.6px;top:184.64px;font-size:12px;color:#303030;width:77px;overflow:hidden;letter-spacing:0.2px">BATTERY 23A</div>
<div style="position:absolute;left:31px;top:200px;width:512px;height:17px;box-sizing:border-box;background:#fff"></div>
<div style="position:absolute;left:0px;top:200px;width:31px;height:17px;box-sizing:border-box;background:#d4d0c8;border-bottom:1px solid #404040;border-right:1px solid #404040"></div>
<div style="position:absolute;left:31px;top:200px;width:41px;height:17px;box-sizing:border-box;border-right:1px solid #d4d4d4;border-bottom:1px solid #d0d0d0"></div>
<div style="position:absolute;left:72px;top:200px;width:95px;height:17px;box-sizing:border-box;border-right:1px solid #d4d4d4;border-bottom:1px solid #d0d0d0"></div>
<div style="position:absolute;left:167px;top:200px;width:296px;height:17px;box-sizing:border-box;border-right:1px solid #d4d4d4;border-bottom:1px solid #d0d0d0"></div>
<div style="position:absolute;left:463px;top:200px;width:80px;height:17px;box-sizing:border-box;border-right:1px solid #d4d4d4;border-bottom:1px solid #d0d0d0"></div>
<div class="t" style="left:2.799999999999997px;top:201.64px;font-size:12px;color:#303030;letter-spacing:0.2px">168</div>
<div class="t" style="left:33.6px;top:201.64px;font-size:12px;color:#303030;width:38px;overflow:hidden;letter-spacing:0.2px">24</div>
<div class="t" style="left:74.6px;top:201.64px;font-size:12px;color:#303030;width:92px;overflow:hidden;letter-spacing:0.2px">09052</div>
<div class="t" style="left:169.6px;top:201.64px;font-size:12px;color:#303030;width:293px;overflow:hidden;letter-spacing:0.2px">024147-000;</div>
<div class="t" style="left:465.6px;top:201.64px;font-size:12px;color:#303030;width:77px;overflow:hidden;letter-spacing:0.2px">BATTERY MAI</div>
<div style="position:absolute;left:31px;top:217px;width:512px;height:16px;box-sizing:border-box;background:#fff"></div>
<div style="position:absolute;left:0px;top:217px;width:31px;height:16px;box-sizing:border-box;background:#d4d0c8;border-bottom:1px solid #404040;border-right:1px solid #404040"></div>
<div style="position:absolute;left:31px;top:217px;width:41px;height:16px;box-sizing:border-box;border-right:1px solid #d4d4d4;border-bottom:1px solid #d0d0d0"></div>
<div style="position:absolute;left:72px;top:217px;width:95px;height:16px;box-sizing:border-box;border-right:1px solid #d4d4d4;border-bottom:1px solid #d0d0d0"></div>
<div style="position:absolute;left:167px;top:217px;width:296px;height:16px;box-sizing:border-box;border-right:1px solid #d4d4d4;border-bottom:1px solid #d0d0d0"></div>
<div style="position:absolute;left:463px;top:217px;width:80px;height:16px;box-sizing:border-box;border-right:1px solid #d4d4d4;border-bottom:1px solid #d0d0d0"></div>
<div class="t" style="left:2.799999999999997px;top:218.64px;font-size:12px;color:#303030;letter-spacing:0.2px">420</div>
<div class="t" style="left:33.6px;top:218.64px;font-size:12px;color:#303030;width:38px;overflow:hidden;letter-spacing:0.2px">24</div>
<div class="t" style="left:74.6px;top:218.64px;font-size:12px;color:#303030;width:92px;overflow:hidden;letter-spacing:0.2px">F6177</div>
<div class="t" style="left:169.6px;top:218.64px;font-size:12px;color:#303030;width:293px;overflow:hidden;letter-spacing:0.2px">024453-000;</div>
<div class="t" style="left:465.6px;top:218.64px;font-size:12px;color:#303030;width:77px;overflow:hidden;letter-spacing:0.2px">NI-CAD BATTE</div>
<div style="position:absolute;left:31px;top:233px;width:512px;height:17px;box-sizing:border-box;background:#fff"></div>
<div style="position:absolute;left:0px;top:233px;width:31px;height:17px;box-sizing:border-box;background:#d4d0c8;border-bottom:1px solid #404040;border-right:1px solid #404040"></div>
<div style="position:absolute;left:31px;top:233px;width:41px;height:17px;box-sizing:border-box;border-right:1px solid #d4d4d4;border-bottom:1px solid #d0d0d0"></div>
<div style="position:absolute;left:72px;top:233px;width:95px;height:17px;box-sizing:border-box;border-right:1px solid #d4d4d4;border-bottom:1px solid #d0d0d0"></div>
<div style="position:absolute;left:167px;top:233px;width:296px;height:17px;box-sizing:border-box;border-right:1px solid #d4d4d4;border-bottom:1px solid #d0d0d0"></div>
<div style="position:absolute;left:463px;top:233px;width:80px;height:17px;box-sizing:border-box;border-right:1px solid #d4d4d4;border-bottom:1px solid #d0d0d0"></div>
<div class="t" style="left:2.799999999999997px;top:234.64px;font-size:12px;color:#303030;letter-spacing:0.2px">363</div>
<div class="t" style="left:33.6px;top:234.64px;font-size:12px;color:#303030;width:38px;overflow:hidden;letter-spacing:0.2px">24</div>
<div class="t" style="left:74.6px;top:234.64px;font-size:12px;color:#303030;width:92px;overflow:hidden;letter-spacing:0.2px">09052</div>
<div class="t" style="left:169.6px;top:234.64px;font-size:12px;color:#303030;width:293px;overflow:hidden;letter-spacing:0.2px">024637-000;</div>
<div class="t" style="left:465.6px;top:234.64px;font-size:12px;color:#303030;width:77px;overflow:hidden;letter-spacing:0.2px">AIRCRAFT BA</div>
<div style="position:absolute;left:31px;top:250px;width:512px;height:17px;box-sizing:border-box;background:#fff"></div>
<div style="position:absolute;left:0px;top:250px;width:31px;height:17px;box-sizing:border-box;background:#d4d0c8;border-bottom:1px solid #404040;border-right:1px solid #404040"></div>
<div style="position:absolute;left:31px;top:250px;width:41px;height:17px;box-sizing:border-box;border-right:1px solid #d4d4d4;border-bottom:1px solid #d0d0d0"></div>
<div style="position:absolute;left:72px;top:250px;width:95px;height:17px;box-sizing:border-box;border-right:1px solid #d4d4d4;border-bottom:1px solid #d0d0d0"></div>
<div style="position:absolute;left:167px;top:250px;width:296px;height:17px;box-sizing:border-box;border-right:1px solid #d4d4d4;border-bottom:1px solid #d0d0d0"></div>
<div style="position:absolute;left:463px;top:250px;width:80px;height:17px;box-sizing:border-box;border-right:1px solid #d4d4d4;border-bottom:1px solid #d0d0d0"></div>
<div class="t" style="left:2.799999999999997px;top:251.64px;font-size:12px;color:#303030;letter-spacing:0.2px">399</div>
<div class="t" style="left:33.6px;top:251.64px;font-size:12px;color:#303030;width:38px;overflow:hidden;letter-spacing:0.2px">24</div>
<div class="t" style="left:74.6px;top:251.64px;font-size:12px;color:#303030;width:92px;overflow:hidden;letter-spacing:0.2px">F6177</div>
<div class="t" style="left:169.6px;top:251.64px;font-size:12px;color:#303030;width:293px;overflow:hidden;letter-spacing:0.2px">1658-6;</div>
<div class="t" style="left:465.6px;top:251.64px;font-size:12px;color:#303030;width:77px;overflow:hidden;letter-spacing:0.2px">BATTERY MAI</div>
<div style="position:absolute;left:31px;top:267px;width:512px;height:16px;box-sizing:border-box;background:#fff"></div>
<div style="position:absolute;left:0px;top:267px;width:31px;height:16px;box-sizing:border-box;background:#d4d0c8;border-bottom:1px solid #404040;border-right:1px solid #404040"></div>
<div style="position:absolute;left:31px;top:267px;width:41px;height:16px;box-sizing:border-box;border-right:1px solid #d4d4d4;border-bottom:1px solid #d0d0d0"></div>
<div style="position:absolute;left:72px;top:267px;width:95px;height:16px;box-sizing:border-box;border-right:1px solid #d4d4d4;border-bottom:1px solid #d0d0d0"></div>
<div style="position:absolute;left:167px;top:267px;width:296px;height:16px;box-sizing:border-box;border-right:1px solid #d4d4d4;border-bottom:1px solid #d0d0d0"></div>
<div style="position:absolute;left:463px;top:267px;width:80px;height:16px;box-sizing:border-box;border-right:1px solid #d4d4d4;border-bottom:1px solid #d0d0d0"></div>
<div class="t" style="left:2.799999999999997px;top:268.64px;font-size:12px;color:#303030;letter-spacing:0.2px">206</div>
<div class="t" style="left:33.6px;top:268.64px;font-size:12px;color:#303030;width:38px;overflow:hidden;letter-spacing:0.2px">24</div>
<div class="t" style="left:74.6px;top:268.64px;font-size:12px;color:#303030;width:92px;overflow:hidden;letter-spacing:0.2px">09052</div>
<div class="t" style="left:169.6px;top:268.64px;font-size:12px;color:#303030;width:293px;overflow:hidden;letter-spacing:0.2px">1756-1;</div>
<div class="t" style="left:465.6px;top:268.64px;font-size:12px;color:#303030;width:77px;overflow:hidden;letter-spacing:0.2px">AIRCRAFT BA</div>
<div style="position:absolute;left:31px;top:283px;width:512px;height:17px;box-sizing:border-box;background:#fff"></div>
<div style="position:absolute;left:0px;top:283px;width:31px;height:17px;box-sizing:border-box;background:#d4d0c8;border-bottom:1px solid #404040;border-right:1px solid #404040"></div>
<div style="position:absolute;left:31px;top:283px;width:41px;height:17px;box-sizing:border-box;border-right:1px solid #d4d4d4;border-bottom:1px solid #d0d0d0"></div>
<div style="position:absolute;left:72px;top:283px;width:95px;height:17px;box-sizing:border-box;border-right:1px solid #d4d4d4;border-bottom:1px solid #d0d0d0"></div>
<div style="position:absolute;left:167px;top:283px;width:296px;height:17px;box-sizing:border-box;border-right:1px solid #d4d4d4;border-bottom:1px solid #d0d0d0"></div>
<div style="position:absolute;left:463px;top:283px;width:80px;height:17px;box-sizing:border-box;border-right:1px solid #d4d4d4;border-bottom:1px solid #d0d0d0"></div>
<div class="t" style="left:2.799999999999997px;top:284.64px;font-size:12px;color:#303030;letter-spacing:0.2px">207</div>
<div class="t" style="left:33.6px;top:284.64px;font-size:12px;color:#303030;width:38px;overflow:hidden;letter-spacing:0.2px">24</div>
<div class="t" style="left:74.6px;top:284.64px;font-size:12px;color:#303030;width:92px;overflow:hidden;letter-spacing:0.2px">09052</div>
<div class="t" style="left:169.6px;top:284.64px;font-size:12px;color:#303030;width:293px;overflow:hidden;letter-spacing:0.2px">1756-3;</div>
<div class="t" style="left:465.6px;top:284.64px;font-size:12px;color:#303030;width:77px;overflow:hidden;letter-spacing:0.2px">AIRCRAFT BA</div>
<div style="position:absolute;left:31px;top:300px;width:512px;height:17px;box-sizing:border-box;background:#fff"></div>
<div style="position:absolute;left:0px;top:300px;width:31px;height:17px;box-sizing:border-box;background:#d4d0c8;border-bottom:1px solid #404040;border-right:1px solid #404040"></div>
<div style="position:absolute;left:31px;top:300px;width:41px;height:17px;box-sizing:border-box;border-right:1px solid #d4d4d4;border-bottom:1px solid #d0d0d0"></div>
<div style="position:absolute;left:72px;top:300px;width:95px;height:17px;box-sizing:border-box;border-right:1px solid #d4d4d4;border-bottom:1px solid #d0d0d0"></div>
<div style="position:absolute;left:167px;top:300px;width:296px;height:17px;box-sizing:border-box;border-right:1px solid #d4d4d4;border-bottom:1px solid #d0d0d0"></div>
<div style="position:absolute;left:463px;top:300px;width:80px;height:17px;box-sizing:border-box;border-right:1px solid #d4d4d4;border-bottom:1px solid #d0d0d0"></div>
<div class="t" style="left:2.799999999999997px;top:301.64px;font-size:12px;color:#303030;letter-spacing:0.2px">194</div>
<div class="t" style="left:33.6px;top:301.64px;font-size:12px;color:#303030;width:38px;overflow:hidden;letter-spacing:0.2px">24</div>
<div class="t" style="left:74.6px;top:301.64px;font-size:12px;color:#303030;width:92px;overflow:hidden;letter-spacing:0.2px">F6177</div>
<div class="t" style="left:169.6px;top:301.64px;font-size:12px;color:#303030;width:293px;overflow:hidden;letter-spacing:0.2px">2013-1(A);</div>
<div class="t" style="left:465.6px;top:301.64px;font-size:12px;color:#303030;width:77px;overflow:hidden;letter-spacing:0.2px">BATTERY PAC</div>
<div style="position:absolute;left:31px;top:317px;width:512px;height:16px;box-sizing:border-box;background:#fff"></div>
<div style="position:absolute;left:0px;top:317px;width:31px;height:16px;box-sizing:border-box;background:#d4d0c8;border-bottom:1px solid #404040;border-right:1px solid #404040"></div>
<div style="position:absolute;left:31px;top:317px;width:41px;height:16px;box-sizing:border-box;border-right:1px solid #d4d4d4;border-bottom:1px solid #d0d0d0"></div>
<div style="position:absolute;left:72px;top:317px;width:95px;height:16px;box-sizing:border-box;border-right:1px solid #d4d4d4;border-bottom:1px solid #d0d0d0"></div>
<div style="position:absolute;left:167px;top:317px;width:296px;height:16px;box-sizing:border-box;border-right:1px solid #d4d4d4;border-bottom:1px solid #d0d0d0"></div>
<div style="position:absolute;left:463px;top:317px;width:80px;height:16px;box-sizing:border-box;border-right:1px solid #d4d4d4;border-bottom:1px solid #d0d0d0"></div>
<div class="t" style="left:2.799999999999997px;top:318.64px;font-size:12px;color:#303030;letter-spacing:0.2px">114</div>
<div class="t" style="left:33.6px;top:318.64px;font-size:12px;color:#303030;width:38px;overflow:hidden;letter-spacing:0.2px">24</div>
<div class="t" style="left:74.6px;top:318.64px;font-size:12px;color:#303030;width:92px;overflow:hidden;letter-spacing:0.2px">F6177</div>
<div class="t" style="left:169.6px;top:318.64px;font-size:12px;color:#303030;width:293px;overflow:hidden;letter-spacing:0.2px">23491-3;</div>
<div class="t" style="left:465.6px;top:318.64px;font-size:12px;color:#303030;width:77px;overflow:hidden;letter-spacing:0.2px">BATTERY 23A</div>
<div style="position:absolute;left:31px;top:333px;width:512px;height:17px;box-sizing:border-box;background:#fff"></div>
<div style="position:absolute;left:0px;top:333px;width:31px;height:17px;box-sizing:border-box;background:#d4d0c8;border-bottom:1px solid #404040;border-right:1px solid #404040"></div>
<div style="position:absolute;left:31px;top:333px;width:41px;height:17px;box-sizing:border-box;border-right:1px solid #d4d4d4;border-bottom:1px solid #d0d0d0"></div>
<div style="position:absolute;left:72px;top:333px;width:95px;height:17px;box-sizing:border-box;border-right:1px solid #d4d4d4;border-bottom:1px solid #d0d0d0"></div>
<div style="position:absolute;left:167px;top:333px;width:296px;height:17px;box-sizing:border-box;border-right:1px solid #d4d4d4;border-bottom:1px solid #d0d0d0"></div>
<div style="position:absolute;left:463px;top:333px;width:80px;height:17px;box-sizing:border-box;border-right:1px solid #d4d4d4;border-bottom:1px solid #d0d0d0"></div>
<div class="t" style="left:2.799999999999997px;top:334.64px;font-size:12px;color:#303030;letter-spacing:0.2px">195</div>
<div class="t" style="left:33.6px;top:334.64px;font-size:12px;color:#303030;width:38px;overflow:hidden;letter-spacing:0.2px">24</div>
<div class="t" style="left:74.6px;top:334.64px;font-size:12px;color:#303030;width:92px;overflow:hidden;letter-spacing:0.2px">F6177</div>
<div class="t" style="left:169.6px;top:334.64px;font-size:12px;color:#303030;width:293px;overflow:hidden;letter-spacing:0.2px">23576-1;</div>
<div class="t" style="left:465.6px;top:334.64px;font-size:12px;color:#303030;width:77px;overflow:hidden;letter-spacing:0.2px">BATTERY 24A</div>
<div style="position:absolute;left:31px;top:350px;width:512px;height:17px;box-sizing:border-box;background:#fff"></div>
<div style="position:absolute;left:0px;top:350px;width:31px;height:17px;box-sizing:border-box;background:#d4d0c8;border-bottom:1px solid #404040;border-right:1px solid #404040"></div>
<div style="position:absolute;left:31px;top:350px;width:41px;height:17px;box-sizing:border-box;border-right:1px solid #d4d4d4;border-bottom:1px solid #d0d0d0"></div>
<div style="position:absolute;left:72px;top:350px;width:95px;height:17px;box-sizing:border-box;border-right:1px solid #d4d4d4;border-bottom:1px solid #d0d0d0"></div>
<div style="position:absolute;left:167px;top:350px;width:296px;height:17px;box-sizing:border-box;border-right:1px solid #d4d4d4;border-bottom:1px solid #d0d0d0"></div>
<div style="position:absolute;left:463px;top:350px;width:80px;height:17px;box-sizing:border-box;border-right:1px solid #d4d4d4;border-bottom:1px solid #d0d0d0"></div>
<div class="t" style="left:2.799999999999997px;top:351.64px;font-size:12px;color:#303030;letter-spacing:0.2px">287</div>
<div class="t" style="left:33.6px;top:351.64px;font-size:12px;color:#303030;width:38px;overflow:hidden;letter-spacing:0.2px">24</div>
<div class="t" style="left:74.6px;top:351.64px;font-size:12px;color:#303030;width:92px;overflow:hidden;letter-spacing:0.2px">F6177</div>
<div class="t" style="left:169.6px;top:351.64px;font-size:12px;color:#303030;width:293px;overflow:hidden;letter-spacing:0.2px">2758;</div>
<div class="t" style="left:465.6px;top:351.64px;font-size:12px;color:#303030;width:77px;overflow:hidden;letter-spacing:0.2px">MAIN BATTER</div>
<div style="position:absolute;left:31px;top:367px;width:512px;height:16px;box-sizing:border-box;background:#fff"></div>
<div style="position:absolute;left:0px;top:367px;width:31px;height:16px;box-sizing:border-box;background:#d4d0c8;border-bottom:1px solid #404040;border-right:1px solid #404040"></div>
<div style="position:absolute;left:31px;top:367px;width:41px;height:16px;box-sizing:border-box;border-right:1px solid #d4d4d4;border-bottom:1px solid #d0d0d0"></div>
<div style="position:absolute;left:72px;top:367px;width:95px;height:16px;box-sizing:border-box;border-right:1px solid #d4d4d4;border-bottom:1px solid #d0d0d0"></div>
<div style="position:absolute;left:167px;top:367px;width:296px;height:16px;box-sizing:border-box;border-right:1px solid #d4d4d4;border-bottom:1px solid #d0d0d0"></div>
<div style="position:absolute;left:463px;top:367px;width:80px;height:16px;box-sizing:border-box;border-right:1px solid #d4d4d4;border-bottom:1px solid #d0d0d0"></div>
<div class="t" style="left:2.799999999999997px;top:368.64px;font-size:12px;color:#303030;letter-spacing:0.2px">283</div>
<div class="t" style="left:33.6px;top:368.64px;font-size:12px;color:#303030;width:38px;overflow:hidden;letter-spacing:0.2px">24</div>
<div class="t" style="left:74.6px;top:368.64px;font-size:12px;color:#303030;width:92px;overflow:hidden;letter-spacing:0.2px">74025</div>
<div class="t" style="left:169.6px;top:368.64px;font-size:12px;color:#303030;width:293px;overflow:hidden;letter-spacing:0.2px">32364-001;</div>
<div class="t" style="left:465.6px;top:368.64px;font-size:12px;color:#303030;width:77px;overflow:hidden;letter-spacing:0.2px">Nickel-Cadmiu</div>
<div style="position:absolute;left:31px;top:383px;width:512px;height:17px;box-sizing:border-box;background:#fff"></div>
<div style="position:absolute;left:0px;top:383px;width:31px;height:17px;box-sizing:border-box;background:#d4d0c8;border-bottom:1px solid #404040;border-right:1px solid #404040"></div>
<div style="position:absolute;left:31px;top:383px;width:41px;height:17px;box-sizing:border-box;border-right:1px solid #d4d4d4;border-bottom:1px solid #d0d0d0"></div>
<div style="position:absolute;left:72px;top:383px;width:95px;height:17px;box-sizing:border-box;border-right:1px solid #d4d4d4;border-bottom:1px solid #d0d0d0"></div>
<div style="position:absolute;left:167px;top:383px;width:296px;height:17px;box-sizing:border-box;border-right:1px solid #d4d4d4;border-bottom:1px solid #d0d0d0"></div>
<div style="position:absolute;left:463px;top:383px;width:80px;height:17px;box-sizing:border-box;border-right:1px solid #d4d4d4;border-bottom:1px solid #d0d0d0"></div>
<div class="t" style="left:2.799999999999997px;top:384.64px;font-size:12px;color:#303030;letter-spacing:0.2px">262</div>
<div class="t" style="left:33.6px;top:384.64px;font-size:12px;color:#303030;width:38px;overflow:hidden;letter-spacing:0.2px">24</div>
<div class="t" style="left:74.6px;top:384.64px;font-size:12px;color:#303030;width:92px;overflow:hidden;letter-spacing:0.2px">F6177</div>
<div class="t" style="left:169.6px;top:384.64px;font-size:12px;color:#303030;width:293px;overflow:hidden;letter-spacing:0.2px">40176-4;</div>
<div class="t" style="left:465.6px;top:384.64px;font-size:12px;color:#303030;width:77px;overflow:hidden;letter-spacing:0.2px">BATTERY MAI</div>
<div style="position:absolute;left:31px;top:400px;width:512px;height:17px;box-sizing:border-box;background:#fff"></div>
<div style="position:absolute;left:0px;top:400px;width:31px;height:17px;box-sizing:border-box;background:#d4d0c8;border-bottom:1px solid #404040;border-right:1px solid #404040"></div>
<div style="position:absolute;left:31px;top:400px;width:41px;height:17px;box-sizing:border-box;border-right:1px solid #d4d4d4;border-bottom:1px solid #d0d0d0"></div>
<div style="position:absolute;left:72px;top:400px;width:95px;height:17px;box-sizing:border-box;border-right:1px solid #d4d4d4;border-bottom:1px solid #d0d0d0"></div>
<div style="position:absolute;left:167px;top:400px;width:296px;height:17px;box-sizing:border-box;border-right:1px solid #d4d4d4;border-bottom:1px solid #d0d0d0"></div>
<div style="position:absolute;left:463px;top:400px;width:80px;height:17px;box-sizing:border-box;border-right:1px solid #d4d4d4;border-bottom:1px solid #d0d0d0"></div>
<div class="t" style="left:2.799999999999997px;top:401.64px;font-size:12px;color:#303030;letter-spacing:0.2px">1</div>
<div class="t" style="left:33.6px;top:401.64px;font-size:12px;color:#303030;width:38px;overflow:hidden;letter-spacing:0.2px">24</div>
<div class="t" style="left:74.6px;top:401.64px;font-size:12px;color:#303030;width:92px;overflow:hidden;letter-spacing:0.2px">F6177</div>
<div class="t" style="left:169.6px;top:401.64px;font-size:12px;color:#303030;width:293px;overflow:hidden;letter-spacing:0.2px">40176-7;</div>
<div class="t" style="left:465.6px;top:401.64px;font-size:12px;color:#303030;width:77px;overflow:hidden;letter-spacing:0.2px">BATTERY MAI</div>
<div style="position:absolute;left:31px;top:417px;width:512px;height:16px;box-sizing:border-box;background:#fff"></div>
<div style="position:absolute;left:0px;top:417px;width:31px;height:16px;box-sizing:border-box;background:#d4d0c8;border-bottom:1px solid #404040;border-right:1px solid #404040"></div>
<div style="position:absolute;left:31px;top:417px;width:41px;height:16px;box-sizing:border-box;border-right:1px solid #d4d4d4;border-bottom:1px solid #d0d0d0"></div>
<div style="position:absolute;left:72px;top:417px;width:95px;height:16px;box-sizing:border-box;border-right:1px solid #d4d4d4;border-bottom:1px solid #d0d0d0"></div>
<div style="position:absolute;left:167px;top:417px;width:296px;height:16px;box-sizing:border-box;border-right:1px solid #d4d4d4;border-bottom:1px solid #d0d0d0"></div>
<div style="position:absolute;left:463px;top:417px;width:80px;height:16px;box-sizing:border-box;border-right:1px solid #d4d4d4;border-bottom:1px solid #d0d0d0"></div>
<div class="t" style="left:2.799999999999997px;top:418.64px;font-size:12px;color:#303030;letter-spacing:0.2px">209</div>
<div class="t" style="left:33.6px;top:418.64px;font-size:12px;color:#303030;width:38px;overflow:hidden;letter-spacing:0.2px">24</div>
<div class="t" style="left:74.6px;top:418.64px;font-size:12px;color:#303030;width:92px;overflow:hidden;letter-spacing:0.2px">F6177</div>
<div class="t" style="left:169.6px;top:418.64px;font-size:12px;color:#303030;width:293px;overflow:hidden;letter-spacing:0.2px">40178-24;</div>
<div class="t" style="left:465.6px;top:418.64px;font-size:12px;color:#303030;width:77px;overflow:hidden;letter-spacing:0.2px">NI-CAD AIRCR</div>
<div style="position:absolute;left:31px;top:433px;width:512px;height:17px;box-sizing:border-box;background:#fff"></div>
<div style="position:absolute;left:0px;top:433px;width:31px;height:17px;box-sizing:border-box;background:#d4d0c8;border-bottom:1px solid #404040;border-right:1px solid #404040"></div>
<div style="position:absolute;left:31px;top:433px;width:41px;height:17px;box-sizing:border-box;border-right:1px solid #d4d4d4;border-bottom:1px solid #d0d0d0"></div>
<div style="position:absolute;left:72px;top:433px;width:95px;height:17px;box-sizing:border-box;border-right:1px solid #d4d4d4;border-bottom:1px solid #d0d0d0"></div>
<div style="position:absolute;left:167px;top:433px;width:296px;height:17px;box-sizing:border-box;border-right:1px solid #d4d4d4;border-bottom:1px solid #d0d0d0"></div>
<div style="position:absolute;left:463px;top:433px;width:80px;height:17px;box-sizing:border-box;border-right:1px solid #d4d4d4;border-bottom:1px solid #d0d0d0"></div>
<div class="t" style="left:2.799999999999997px;top:434.64px;font-size:12px;color:#303030;letter-spacing:0.2px">211</div>
<div class="t" style="left:33.6px;top:434.64px;font-size:12px;color:#303030;width:38px;overflow:hidden;letter-spacing:0.2px">24</div>
<div class="t" style="left:74.6px;top:434.64px;font-size:12px;color:#303030;width:92px;overflow:hidden;letter-spacing:0.2px">F6177</div>
<div class="t" style="left:169.6px;top:434.64px;font-size:12px;color:#303030;width:293px;overflow:hidden;letter-spacing:0.2px">40178-26;</div>
<div class="t" style="left:465.6px;top:434.64px;font-size:12px;color:#303030;width:77px;overflow:hidden;letter-spacing:0.2px">NI-CAD AIRCR</div>
<div style="position:absolute;left:31px;top:450px;width:512px;height:17px;box-sizing:border-box;background:#fff"></div>
<div style="position:absolute;left:0px;top:450px;width:31px;height:17px;box-sizing:border-box;background:#d4d0c8;border-bottom:1px solid #404040;border-right:1px solid #404040"></div>
<div style="position:absolute;left:31px;top:450px;width:41px;height:17px;box-sizing:border-box;border-right:1px solid #d4d4d4;border-bottom:1px solid #d0d0d0"></div>
<div style="position:absolute;left:72px;top:450px;width:95px;height:17px;box-sizing:border-box;border-right:1px solid #d4d4d4;border-bottom:1px solid #d0d0d0"></div>
<div style="position:absolute;left:167px;top:450px;width:296px;height:17px;box-sizing:border-box;border-right:1px solid #d4d4d4;border-bottom:1px solid #d0d0d0"></div>
<div style="position:absolute;left:463px;top:450px;width:80px;height:17px;box-sizing:border-box;border-right:1px solid #d4d4d4;border-bottom:1px solid #d0d0d0"></div>
<div class="t" style="left:2.799999999999997px;top:451.64px;font-size:12px;color:#303030;letter-spacing:0.2px">401</div>
<div class="t" style="left:33.6px;top:451.64px;font-size:12px;color:#303030;width:38px;overflow:hidden;letter-spacing:0.2px">24</div>
<div class="t" style="left:74.6px;top:451.64px;font-size:12px;color:#303030;width:92px;overflow:hidden;letter-spacing:0.2px">F6177</div>
<div class="t" style="left:169.6px;top:451.64px;font-size:12px;color:#303030;width:293px;overflow:hidden;letter-spacing:0.2px">40678-2;</div>
<div class="t" style="left:465.6px;top:451.64px;font-size:12px;color:#303030;width:77px;overflow:hidden;letter-spacing:0.2px">BATTERY MAI</div>
<div style="position:absolute;left:31px;top:467px;width:512px;height:16px;box-sizing:border-box;background:#fff"></div>
<div style="position:absolute;left:0px;top:467px;width:31px;height:16px;box-sizing:border-box;background:#d4d0c8;border-bottom:1px solid #404040;border-right:1px solid #404040"></div>
<div style="position:absolute;left:31px;top:467px;width:41px;height:16px;box-sizing:border-box;border-right:1px solid #d4d4d4;border-bottom:1px solid #d0d0d0"></div>
<div style="position:absolute;left:72px;top:467px;width:95px;height:16px;box-sizing:border-box;border-right:1px solid #d4d4d4;border-bottom:1px solid #d0d0d0"></div>
<div style="position:absolute;left:167px;top:467px;width:296px;height:16px;box-sizing:border-box;border-right:1px solid #d4d4d4;border-bottom:1px solid #d0d0d0"></div>
<div style="position:absolute;left:463px;top:467px;width:80px;height:16px;box-sizing:border-box;border-right:1px solid #d4d4d4;border-bottom:1px solid #d0d0d0"></div>
<div class="t" style="left:2.799999999999997px;top:468.64px;font-size:12px;color:#303030;letter-spacing:0.2px">245</div>
<div class="t" style="left:33.6px;top:468.64px;font-size:12px;color:#303030;width:38px;overflow:hidden;letter-spacing:0.2px">24</div>
<div class="t" style="left:74.6px;top:468.64px;font-size:12px;color:#303030;width:92px;overflow:hidden;letter-spacing:0.2px">F6177</div>
<div class="t" style="left:169.6px;top:468.64px;font-size:12px;color:#303030;width:293px;overflow:hidden;letter-spacing:0.2px">4076;</div>
<div class="t" style="left:465.6px;top:468.64px;font-size:12px;color:#303030;width:77px;overflow:hidden;letter-spacing:0.2px">BATTERY MAI</div>
<div style="position:absolute;left:31px;top:483px;width:512px;height:17px;box-sizing:border-box;background:#fff"></div>
<div style="position:absolute;left:0px;top:483px;width:31px;height:17px;box-sizing:border-box;background:#d4d0c8;border-bottom:1px solid #404040;border-right:1px solid #404040"></div>
<div style="position:absolute;left:31px;top:483px;width:41px;height:17px;box-sizing:border-box;border-right:1px solid #d4d4d4;border-bottom:1px solid #d0d0d0"></div>
<div style="position:absolute;left:72px;top:483px;width:95px;height:17px;box-sizing:border-box;border-right:1px solid #d4d4d4;border-bottom:1px solid #d0d0d0"></div>
<div style="position:absolute;left:167px;top:483px;width:296px;height:17px;box-sizing:border-box;border-right:1px solid #d4d4d4;border-bottom:1px solid #d0d0d0"></div>
<div style="position:absolute;left:463px;top:483px;width:80px;height:17px;box-sizing:border-box;border-right:1px solid #d4d4d4;border-bottom:1px solid #d0d0d0"></div>
<div class="t" style="left:2.799999999999997px;top:484.64px;font-size:12px;color:#303030;letter-spacing:0.2px">246</div>
<div class="t" style="left:33.6px;top:484.64px;font-size:12px;color:#303030;width:38px;overflow:hidden;letter-spacing:0.2px">24</div>
<div class="t" style="left:74.6px;top:484.64px;font-size:12px;color:#303030;width:92px;overflow:hidden;letter-spacing:0.2px">F6177</div>
<div class="t" style="left:169.6px;top:484.64px;font-size:12px;color:#303030;width:293px;overflow:hidden;letter-spacing:0.2px">4076-1;</div>
<div class="t" style="left:465.6px;top:484.64px;font-size:12px;color:#303030;width:77px;overflow:hidden;letter-spacing:0.2px">BATTERY MAI</div>
<div style="position:absolute;left:31px;top:500px;width:512px;height:17px;box-sizing:border-box;background:#fff"></div>
<div style="position:absolute;left:0px;top:500px;width:31px;height:17px;box-sizing:border-box;background:#d4d0c8;border-bottom:1px solid #404040;border-right:1px solid #404040"></div>
<div style="position:absolute;left:31px;top:500px;width:41px;height:17px;box-sizing:border-box;border-right:1px solid #d4d4d4;border-bottom:1px solid #d0d0d0"></div>
<div style="position:absolute;left:72px;top:500px;width:95px;height:17px;box-sizing:border-box;border-right:1px solid #d4d4d4;border-bottom:1px solid #d0d0d0"></div>
<div style="position:absolute;left:167px;top:500px;width:296px;height:17px;box-sizing:border-box;border-right:1px solid #d4d4d4;border-bottom:1px solid #d0d0d0"></div>
<div style="position:absolute;left:463px;top:500px;width:80px;height:17px;box-sizing:border-box;border-right:1px solid #d4d4d4;border-bottom:1px solid #d0d0d0"></div>
<div class="t" style="left:2.799999999999997px;top:501.64px;font-size:12px;color:#303030;letter-spacing:0.2px">400</div>
<div class="t" style="left:33.6px;top:501.64px;font-size:12px;color:#303030;width:38px;overflow:hidden;letter-spacing:0.2px">24</div>
<div class="t" style="left:74.6px;top:501.64px;font-size:12px;color:#303030;width:92px;overflow:hidden;letter-spacing:0.2px">F6177</div>
<div class="t" style="left:169.6px;top:501.64px;font-size:12px;color:#303030;width:293px;overflow:hidden;letter-spacing:0.2px">4078-2;</div>
<div class="t" style="left:465.6px;top:501.64px;font-size:12px;color:#303030;width:77px;overflow:hidden;letter-spacing:0.2px">BATTERY MAI</div>
<div style="position:absolute;left:31px;top:517px;width:512px;height:16px;box-sizing:border-box;background:#fff"></div>
<div style="position:absolute;left:0px;top:517px;width:31px;height:16px;box-sizing:border-box;background:#d4d0c8;border-bottom:1px solid #404040;border-right:1px solid #404040"></div>
<div style="position:absolute;left:31px;top:517px;width:41px;height:16px;box-sizing:border-box;border-right:1px solid #d4d4d4;border-bottom:1px solid #d0d0d0"></div>
<div style="position:absolute;left:72px;top:517px;width:95px;height:16px;box-sizing:border-box;border-right:1px solid #d4d4d4;border-bottom:1px solid #d0d0d0"></div>
<div style="position:absolute;left:167px;top:517px;width:296px;height:16px;box-sizing:border-box;border-right:1px solid #d4d4d4;border-bottom:1px solid #d0d0d0"></div>
<div style="position:absolute;left:463px;top:517px;width:80px;height:16px;box-sizing:border-box;border-right:1px solid #d4d4d4;border-bottom:1px solid #d0d0d0"></div>
<div class="t" style="left:2.799999999999997px;top:518.64px;font-size:12px;color:#303030;letter-spacing:0.2px">210</div>
<div class="t" style="left:33.6px;top:518.64px;font-size:12px;color:#303030;width:38px;overflow:hidden;letter-spacing:0.2px">24</div>
<div class="t" style="left:74.6px;top:518.64px;font-size:12px;color:#303030;width:92px;overflow:hidden;letter-spacing:0.2px">F6177</div>
<div class="t" style="left:169.6px;top:518.64px;font-size:12px;color:#303030;width:293px;overflow:hidden;letter-spacing:0.2px">4078-24;</div>
<div class="t" style="left:465.6px;top:518.64px;font-size:12px;color:#303030;width:77px;overflow:hidden;letter-spacing:0.2px">NI-CAD AIRCR</div>
<div style="position:absolute;left:31px;top:533px;width:512px;height:17px;box-sizing:border-box;background:#fff"></div>
<div style="position:absolute;left:0px;top:533px;width:31px;height:17px;box-sizing:border-box;background:#d4d0c8;border-bottom:1px solid #404040;border-right:1px solid #404040"></div>
<div style="position:absolute;left:31px;top:533px;width:41px;height:17px;box-sizing:border-box;border-right:1px solid #d4d4d4;border-bottom:1px solid #d0d0d0"></div>
<div style="position:absolute;left:72px;top:533px;width:95px;height:17px;box-sizing:border-box;border-right:1px solid #d4d4d4;border-bottom:1px solid #d0d0d0"></div>
<div style="position:absolute;left:167px;top:533px;width:296px;height:17px;box-sizing:border-box;border-right:1px solid #d4d4d4;border-bottom:1px solid #d0d0d0"></div>
<div style="position:absolute;left:463px;top:533px;width:80px;height:17px;box-sizing:border-box;border-right:1px solid #d4d4d4;border-bottom:1px solid #d0d0d0"></div>
<div class="t" style="left:2.799999999999997px;top:534.64px;font-size:12px;color:#303030;letter-spacing:0.2px">208</div>
<div class="t" style="left:33.6px;top:534.64px;font-size:12px;color:#303030;width:38px;overflow:hidden;letter-spacing:0.2px">24</div>
<div class="t" style="left:74.6px;top:534.64px;font-size:12px;color:#303030;width:92px;overflow:hidden;letter-spacing:0.2px">F6177</div>
<div class="t" style="left:169.6px;top:534.64px;font-size:12px;color:#303030;width:293px;overflow:hidden;letter-spacing:0.2px">4078-8;</div>
<div class="t" style="left:465.6px;top:534.64px;font-size:12px;color:#303030;width:77px;overflow:hidden;letter-spacing:0.2px">NI-CAD AIRCR</div>
</div>
<div style="position:absolute;left:573px;top:154px;width:14px;height:539px;box-sizing:border-box;background:repeating-conic-gradient(#d4d0c8 0 25%, #fbfaf8 0 50%) 0 0/2px 2px"></div>
<div style="position:absolute;left:573px;top:154px;width:14px;height:14px;box-sizing:border-box;background:#d4d0c8;border-top:1px solid #fff;border-left:1px solid #fff;border-right:1px solid #404040;border-bottom:1px solid #404040;box-shadow:inset -1px -1px #808080"></div>
<svg style="position:absolute;left:576px;top:159px" width="8" height="5"><path d="M0.5 4h7L4 0.5z" fill="#000"/></svg>
<div style="position:absolute;left:573px;top:168px;width:14px;height:14px;box-sizing:border-box;background:#d4d0c8;border-top:1px solid #fff;border-left:1px solid #fff;border-right:1px solid #404040;border-bottom:1px solid #404040;box-shadow:inset -1px -1px #808080"></div>
<div style="position:absolute;left:573px;top:680px;width:14px;height:13px;box-sizing:border-box;background:#d4d0c8;border-top:1px solid #fff;border-left:1px solid #fff;border-right:1px solid #404040;border-bottom:1px solid #404040;box-shadow:inset -1px -1px #808080"></div>
<svg style="position:absolute;left:576px;top:684px" width="8" height="5"><path d="M0 0h7L3.5 4z" fill="#000"/></svg>
<div style="position:absolute;left:30px;top:693px;width:543px;height:14px;box-sizing:border-box;background:repeating-conic-gradient(#d4d0c8 0 25%, #fbfaf8 0 50%) 0 0/2px 2px"></div>
<div style="position:absolute;left:30px;top:693px;width:14px;height:14px;box-sizing:border-box;background:#d4d0c8;border-top:1px solid #fff;border-left:1px solid #fff;border-right:1px solid #404040;border-bottom:1px solid #404040;box-shadow:inset -1px -1px #808080"></div>
<svg style="position:absolute;left:35px;top:696px" width="5" height="8"><path d="M4 0v7L0 3.5z" fill="#000"/></svg>
<div style="position:absolute;left:44px;top:693px;width:14px;height:14px;box-sizing:border-box;background:#d4d0c8;border-top:1px solid #fff;border-left:1px solid #fff;border-right:1px solid #404040;border-bottom:1px solid #404040;box-shadow:inset -1px -1px #808080"></div>
<div style="position:absolute;left:559px;top:693px;width:14px;height:14px;box-sizing:border-box;background:#d4d0c8;border-top:1px solid #fff;border-left:1px solid #fff;border-right:1px solid #404040;border-bottom:1px solid #404040;box-shadow:inset -1px -1px #808080"></div>
<svg style="position:absolute;left:564px;top:696px" width="5" height="8"><path d="M0 0v7L4 3.5z" fill="#000"/></svg>
<div style="position:absolute;left:573px;top:693px;width:14px;height:14px;box-sizing:border-box;background:#d4d0c8"></div>
<div style="position:absolute;left:27px;top:711px;width:176px;height:13px;box-sizing:border-box;border-top:1px solid #808080;border-left:1px solid #808080;border-right:1px solid #fff;border-bottom:1px solid #fff"></div>
<div class="t" style="left:31px;top:711.84px;font-size:8.8px;color:#101010;letter-spacing:-0.35px">Found 689 Capabilities</div>
<div style="position:absolute;left:391px;top:714px;width:20px;height:16px;box-sizing:border-box;background:#ffc4cc"></div>
<div class="t" style="left:420px;top:714.98px;font-size:12.4px;color:#404040;">:Suspended</div>
<div style="position:absolute;left:604px;top:98px;width:785px;height:643px;box-sizing:border-box;background:#dedef6"></div>
<div style="position:absolute;left:603px;top:98px;width:1px;height:644px;box-sizing:border-box;background:#fff"></div>
<div style="position:absolute;left:602px;top:97px;width:1px;height:644px;box-sizing:border-box;background:#808080"></div>
<div style="position:absolute;left:1388px;top:108px;width:1px;height:633px;box-sizing:border-box;background:#808080"></div>
<div style="position:absolute;left:1389px;top:108px;width:1px;height:634px;box-sizing:border-box;background:#fff"></div>
<div style="position:absolute;left:604px;top:740px;width:785px;height:1px;box-sizing:border-box;background:#808080"></div>
<div style="position:absolute;left:603px;top:741px;width:787px;height:1px;box-sizing:border-box;background:#fff"></div>
<div style="position:absolute;left:604px;top:108px;width:784px;height:1px;box-sizing:border-box;background:#a0a0a8"></div>
<div style="position:absolute;left:608px;top:100px;width:145px;height:14px;box-sizing:border-box;background:#dedef6"></div>
<div class="t" style="left:610.5px;top:99.41px;font-size:16.9px;font-weight:bold;color:#000080;">Capability Editor:</div>
<div style="position:absolute;left:616px;top:120px;width:756px;height:21px;box-sizing:border-box;background:#d4d0c8;border-top:1px solid #fff;border-left:1px solid #fff;border-bottom:1px solid #808080;border-right:1px solid #808080"></div>
<div style="position:absolute;left:620px;top:122px;width:2px;height:17px;box-sizing:border-box;border-left:1px solid #808080;border-right:1px solid #fff"></div>
<div style="position:absolute;left:685px;top:122px;width:2px;height:17px;box-sizing:border-box;border-left:1px solid #808080;border-right:1px solid #fff"></div>
<div style="position:absolute;left:748px;top:122px;width:2px;height:17px;box-sizing:border-box;border-left:1px solid #808080;border-right:1px solid #fff"></div>
<div style="position:absolute;left:754px;top:122px;width:2px;height:17px;box-sizing:border-box;border-left:1px solid #808080;border-right:1px solid #fff"></div>
<div style="position:absolute;left:819px;top:122px;width:2px;height:17px;box-sizing:border-box;border-left:1px solid #808080;border-right:1px solid #fff"></div>
<div style="position:absolute;left:881px;top:122px;width:2px;height:17px;box-sizing:border-box;border-left:1px solid #808080;border-right:1px solid #fff"></div>
<div class="t" style="left:661px;top:125.49px;font-size:9.4px;color:#000;">Add</div>
<div class="t" style="left:711px;top:125.49px;font-size:9.4px;color:#000;">Update</div>
<div class="t" style="left:785px;top:125.49px;font-size:9.4px;color:#000;">Delete</div>
<div class="t" style="left:843px;top:125.49px;font-size:9.4px;color:#000;">Refresh</div>
<svg style="position:absolute;left:629px;top:123px" width="15" height="15" viewBox="0 0 15 15"><path d="M3.5 2.5H8L10.5 5V12.5H3.5Z" fill="#50e8f0" stroke="#000" stroke-width="1.1"/><path d="M8 2.5V5H10.5" fill="none" stroke="#000" stroke-width="0.8"/><g fill="#000"><rect x="1" y="2" width="1.2" height="1.2"/><rect x="6" y="0.6" width="1.2" height="1.2"/><rect x="11.5" y="2" width="1.2" height="1.2"/><rect x="1" y="7" width="1.2" height="1.2"/><rect x="12.5" y="8.5" width="1.2" height="1.2"/><rect x="1" y="12.5" width="1.2" height="1.2"/><rect x="6" y="13.2" width="1.2" height="1.2"/><rect x="11.5" y="12.5" width="1.2" height="1.2"/></g></svg>
<svg style="position:absolute;left:692px;top:123px" width="15" height="15" viewBox="0 0 15 15"><path d="M1.5 1.5h6v6h-6z" fill="#1a3a8a" stroke="#000" stroke-width="0.8"/><path d="M3 4.5h3M3 6h3M4.5 2.5l-1.2 1.2h2.4z" stroke="#fff" stroke-width="0.7" fill="#fff"/><path d="M8 3.5h2.5q1.5 0 1.5 1.5v4" fill="none" stroke="#000" stroke-width="1.4"/><path d="M10 8.5h4L12 11z" fill="#000"/><path d="M6.5 10.5h8v3h-8z" fill="#fff" stroke="#000"/><path d="M7.5 12h6" stroke="#909090" stroke-width="0.6"/></svg>
<svg style="position:absolute;left:764px;top:122px" width="12" height="16" viewBox="0 0 12 16"><path d="M4.5 0.5h3v1.5h-3z" fill="#606060" stroke="#000" stroke-width="0.8"/><path d="M1.5 2.5h9v2h-9z" fill="#808080" stroke="#000" stroke-width="0.9"/><path d="M2.5 4.5h7v10h-7z" fill="#707070" stroke="#000"/><path d="M4.5 5.5v8M6 5.5v8M7.5 5.5v8" stroke="#b0b0b0" stroke-width="0.7"/></svg>
<svg style="position:absolute;left:828px;top:124px" width="13" height="12" viewBox="0 0 13 12"><path d="M5 0.8 1 3.8l4 3V5h2.5a2 2 0 0 1 0 4H5v2.2h2.5a4.2 4.2 0 0 0 0-8.4H5z" fill="#30d030" stroke="#005000" stroke-width="0.9"/></svg>
<div class="t" style="left:637px;top:157.30px;font-size:13.7px;color:#404040;">ATA:</div>
<div class="t" style="left:672px;top:158.14px;font-size:12px;color:#e00000;">*</div>
<div style="position:absolute;left:616px;top:172px;width:72px;height:26px;box-sizing:border-box;background:#fff;border:1px solid #303030;border-top-color:#505050"></div>
<div class="t" style="left:616px;width:72px;top:174px;text-align:center;font-size:14px;font-weight:bold;color:#000080">24</div>
<div class="t" style="left:771.5px;top:157.30px;font-size:13.7px;color:#404040;">Group:</div>
<div class="t" style="left:826px;top:158.14px;font-size:12px;color:#e00000;">*</div>
<div class="t" style="left:923px;top:157.30px;font-size:13.7px;color:#404040;">MFR. Code:</div>
<div class="t" style="left:1008px;top:158.14px;font-size:12px;color:#e00000;">*</div>
<div class="t" style="left:1065px;top:157.30px;font-size:13.7px;color:#404040;">MFR Name:</div>
<div style="position:absolute;left:715px;top:173px;width:169px;height:23px;box-sizing:border-box;background:#fff;border-top:2px solid #404040;border-left:2px solid #404040;border-right:1px solid #fff;border-bottom:1px solid #fff"></div>
<div style="position:absolute;left:869px;top:175px;width:14px;height:20px;box-sizing:border-box;background:#d4d0c8;border-top:1px solid #fff;border-left:1px solid #fff;border-right:1px solid #404040;border-bottom:1px solid #404040;box-shadow:inset -1px -1px #909090"></div>
<svg style="position:absolute;left:872px;top:182px" width="7" height="4"><path d="M0 0h7L3.5 4z" fill="#000"/></svg>
<div class="t" style="left:718px;top:175.33px;font-size:14px;font-weight:bold;color:#000080;">BASE</div>
<div style="position:absolute;left:897px;top:173px;width:141px;height:23px;box-sizing:border-box;background:#fff;border-top:2px solid #404040;border-left:2px solid #404040;border-right:1px solid #fff;border-bottom:1px solid #fff"></div>
<div style="position:absolute;left:1023px;top:175px;width:14px;height:20px;box-sizing:border-box;background:#d4d0c8;border-top:1px solid #fff;border-left:1px solid #fff;border-right:1px solid #404040;border-bottom:1px solid #404040;box-shadow:inset -1px -1px #909090"></div>
<svg style="position:absolute;left:1026px;top:182px" width="7" height="4"><path d="M0 0h7L3.5 4z" fill="#000"/></svg>
<div class="t" style="left:900px;top:175.33px;font-size:14px;font-weight:bold;color:#000080;">F6198</div>
<div style="position:absolute;left:1051px;top:172px;width:325px;height:26px;box-sizing:border-box;background:#d4d0c8;border:1px solid #282828"></div>
<div class="t" style="left:1053px;top:174.83px;font-size:14px;font-weight:bold;color:#000;">AIRBUS</div>
<div class="t" style="left:995px;top:204.60px;font-size:13.7px;color:#404040;">Description:</div>
<div class="t" style="left:1093px;top:205.14px;font-size:12px;color:#e00000;">*</div>
<div style="position:absolute;left:981px;top:221px;width:395px;height:47px;box-sizing:border-box;background:#fff;border:1px solid #282828"></div>
<div class="t" style="left:983px;top:224.33px;font-size:14px;font-weight:bold;color:#000080;">DC Sulpfuric acid anodizing</div>
<div class="t" style="left:1002px;top:268.10px;font-size:13.7px;color:#404040;">Eddited By:</div>
<div class="t" style="left:1154px;top:268.10px;font-size:13.7px;color:#404040;">Date:</div>
<div style="position:absolute;left:981px;top:283px;width:114px;height:25px;box-sizing:border-box;background:#d4d0c8;border:1px solid #282828"></div>
<div style="position:absolute;left:1107px;top:283px;width:128px;height:25px;box-sizing:border-box;background:#d4d0c8;border:1px solid #282828"></div>
<div style="position:absolute;left:1247px;top:285px;width:11px;height:11px;box-sizing:border-box;background:#fff;border-top:1px solid #808080;border-left:1px solid #808080;border-right:1px solid #f4f4f4;border-bottom:1px solid #f4f4f4;box-shadow:inset 1px 1px #404040"></div>
<svg style="position:absolute;left:1249px;top:287px" width="8" height="8" viewBox="0 0 8 8"><path d="M0.8 3.4l2 2 3.6-3.8" fill="none" stroke="#000" stroke-width="1.9"/></svg>
<div class="t" style="left:1264px;top:282.26px;font-size:14.3px;font-weight:bold;color:#80000c;">Suspended</div>
<div style="position:absolute;left:617px;top:205px;width:358px;height:219px;box-sizing:border-box;background:#e7e3e7"></div>
<div style="position:absolute;left:617px;top:213px;width:358px;height:211px;box-sizing:border-box;border-top:1px solid #a0a0a0;border-left:1px solid #a0a0a0;border-right:1px solid #fff;border-bottom:1px solid #fff;box-shadow:inset 1px 1px #fff, 1px 1px #a0a0a0"></div>
<div style="position:absolute;left:622px;top:206px;width:72px;height:14px;box-sizing:border-box;background:#e7e3e7"></div>
<div class="t" style="left:624.5px;top:205.01px;font-size:13.8px;font-weight:bold;color:#101060;">PN Editor:</div>
<div style="position:absolute;left:623px;top:225px;width:346px;height:21px;box-sizing:border-box;background:#d4d0c8;border-top:1px solid #fff;border-left:1px solid #fff;border-bottom:1px solid #808080;border-right:1px solid #808080"></div>
<div style="position:absolute;left:627px;top:227px;width:2px;height:17px;box-sizing:border-box;border-left:1px solid #808080;border-right:1px solid #fff"></div>
<div style="position:absolute;left:690px;top:227px;width:2px;height:17px;box-sizing:border-box;border-left:1px solid #808080;border-right:1px solid #fff"></div>
<div style="position:absolute;left:755px;top:227px;width:2px;height:17px;box-sizing:border-box;border-left:1px solid #808080;border-right:1px solid #fff"></div>
<div style="position:absolute;left:760px;top:227px;width:2px;height:17px;box-sizing:border-box;border-left:1px solid #808080;border-right:1px solid #fff"></div>
<div style="position:absolute;left:826px;top:227px;width:2px;height:17px;box-sizing:border-box;border-left:1px solid #808080;border-right:1px solid #fff"></div>
<div style="position:absolute;left:890px;top:227px;width:2px;height:17px;box-sizing:border-box;border-left:1px solid #808080;border-right:1px solid #fff"></div>
<svg style="position:absolute;left:636px;top:228px" width="15" height="15" viewBox="0 0 15 15"><path d="M3.5 2.5H8L10.5 5V12.5H3.5Z" fill="#50e8f0" stroke="#000" stroke-width="1.1"/><path d="M8 2.5V5H10.5" fill="none" stroke="#000" stroke-width="0.8"/><g fill="#000"><rect x="1" y="2" width="1.2" height="1.2"/><rect x="6" y="0.6" width="1.2" height="1.2"/><rect x="11.5" y="2" width="1.2" height="1.2"/><rect x="1" y="7" width="1.2" height="1.2"/><rect x="12.5" y="8.5" width="1.2" height="1.2"/><rect x="1" y="12.5" width="1.2" height="1.2"/><rect x="6" y="13.2" width="1.2" height="1.2"/><rect x="11.5" y="12.5" width="1.2" height="1.2"/></g></svg>
<div class="t" style="left:668px;top:230.79px;font-size:9.4px;color:#000;">Add</div>
<svg style="position:absolute;left:699px;top:228px" width="15" height="15" viewBox="0 0 15 15"><path d="M1.5 1.5h6v6h-6z" fill="#a0a0b0" stroke="#909090" stroke-width="0.8"/><path d="M3 4.5h3M3 6h3M4.5 2.5l-1.2 1.2h2.4z" stroke="#fff" stroke-width="0.7" fill="#fff"/><path d="M8 3.5h2.5q1.5 0 1.5 1.5v4" fill="none" stroke="#909090" stroke-width="1.4"/><path d="M10 8.5h4L12 11z" fill="#909090"/><path d="M6.5 10.5h8v3h-8z" fill="#fff" stroke="#909090"/><path d="M7.5 12h6" stroke="#909090" stroke-width="0.6"/></svg>
<div class="t" style="left:718px;top:230.79px;font-size:9.4px;color:#909090;">Update</div>
<div style="position:absolute;left:770px;top:229px;width:14px;height:14px;box-sizing:border-box;background:#808080"></div>
<div style="position:absolute;left:773px;top:234px;width:2px;height:8px;box-sizing:border-box;background:#d0d0d0"></div>
<div style="position:absolute;left:773px;top:231px;width:2px;height:2px;box-sizing:border-box;background:#d0d0d0"></div>
<div class="t" style="left:792px;top:230.79px;font-size:9.4px;color:#909090;">Delete</div>
<svg style="position:absolute;left:835px;top:231px" width="13" height="12" viewBox="0 0 13 12"><path d="M5 0.8 1 3.8l4 3V5h2.5a2 2 0 0 1 0 4H5v2.2h2.5a4.2 4.2 0 0 0 0-8.4H5z" fill="#30d030" stroke="#005000" stroke-width="0.9"/></svg>
<div class="t" style="left:850px;top:230.79px;font-size:9.4px;color:#000;">Refresh</div>
<div class="t" style="left:759px;top:261.30px;font-size:13.7px;color:#404040;">Part Number:</div>
<div class="t" style="left:855px;top:261.14px;font-size:12px;color:#e00000;">*</div>
<div style="position:absolute;left:631px;top:278px;width:336px;height:22px;box-sizing:border-box;background:#fff;border-top:2px solid #404040;border-left:2px solid #404040;border-right:1px solid #fff;border-bottom:1px solid #fff"></div>
<div style="position:absolute;left:952px;top:280px;width:14px;height:19px;box-sizing:border-box;background:#d4d0c8;border-top:1px solid #fff;border-left:1px solid #fff;border-right:1px solid #404040;border-bottom:1px solid #404040;box-shadow:inset -1px -1px #909090"></div>
<svg style="position:absolute;left:955px;top:287px" width="7" height="4"><path d="M0 0h7L3.5 4z" fill="#000"/></svg>
<div style="position:absolute;left:630px;top:305px;width:339px;height:117px;box-sizing:border-box;background:#e7e3e7;border:1px solid #303030;border-right-color:#404040;border-bottom-color:#606060"></div>
<div style="position:absolute;left:631px;top:306px;width:31px;height:16px;box-sizing:border-box;background:#d4d0c8;border-right:1px solid #404040;border-bottom:1px solid #505050"></div>
<div style="position:absolute;left:662px;top:306px;width:88px;height:16px;box-sizing:border-box;background:#d4d0c8;border-right:1px solid #404040;border-bottom:1px solid #505050;border-left:1px solid #fff"></div>
<div class="t" style="left:634.2px;top:307.34px;font-size:12px;color:#303030;">ID:</div>
<div class="t" style="left:665.5px;top:307.34px;font-size:12px;color:#303030;">PN:</div>
<div style="position:absolute;left:631px;top:322px;width:31px;height:16px;box-sizing:border-box;background:#d4d0c8;border-right:1px solid #404040;border-bottom:1px solid #404040"></div>
<div style="position:absolute;left:662px;top:322px;width:88px;height:16px;box-sizing:border-box;background:#fff;border-right:1px solid #404040;border-bottom:1px solid #404040"></div>
<div class="t" style="left:634.2px;top:323.34px;font-size:12px;color:#303030;letter-spacing:0.2px">695</div>
<div class="t" style="left:665.5px;top:323.34px;font-size:12px;color:#303030;letter-spacing:0.2px">90002464-</div>
<div style="position:absolute;left:617px;top:443px;width:751px;height:129px;box-sizing:border-box;border-top:1px solid #a0a0a8;border-left:1px solid #a0a0a8;border-right:1px solid #fff;border-bottom:1px solid #fff;box-shadow:inset 1px 1px #fff, 1px 1px #a0a0a8"></div>
<div style="position:absolute;left:622px;top:436px;width:146px;height:14px;box-sizing:border-box;background:#dedef6"></div>
<div class="t" style="left:624.3px;top:436.33px;font-size:14px;font-weight:bold;color:#101060;">Approved Capability:</div>
<div class="t" style="left:835px;top:446.60px;font-size:13.7px;color:#404040;">Notes:</div>
<div style="position:absolute;left:896px;top:448px;width:11px;height:11px;box-sizing:border-box;background:#fff;border-top:1px solid #808080;border-left:1px solid #808080;border-right:1px solid #f4f4f4;border-bottom:1px solid #f4f4f4;box-shadow:inset 1px 1px #404040"></div>
<svg style="position:absolute;left:898px;top:450px" width="8" height="8" viewBox="0 0 8 8"><path d="M0.8 3.4l2 2 3.6-3.8" fill="none" stroke="#000" stroke-width="1.9"/></svg>
<div class="t" style="left:913.5px;top:447.46px;font-size:12.75px;font-weight:bold;color:#80000c;">Merge Capability</div>
<div class="t" style="left:632.3px;top:466.73px;font-size:14px;font-weight:bold;color:#101010;">Overhaul</div>
<div style="position:absolute;left:775px;top:469px;width:11px;height:11px;box-sizing:border-box;background:#fff;border-top:1px solid #808080;border-left:1px solid #808080;border-right:1px solid #f4f4f4;border-bottom:1px solid #f4f4f4;box-shadow:inset 1px 1px #404040"></div>
<svg style="position:absolute;left:777px;top:471px" width="8" height="8" viewBox="0 0 8 8"><path d="M0.8 3.4l2 2 3.6-3.8" fill="none" stroke="#000" stroke-width="1.9"/></svg>
<div style="position:absolute;left:813px;top:462px;width:549px;height:26px;box-sizing:border-box;background:#fff;border:1px solid #282828"></div>
<div class="t" style="left:632.3px;top:493.03px;font-size:14px;font-weight:bold;color:#101010;">Modification</div>
<div style="position:absolute;left:775px;top:496px;width:11px;height:11px;box-sizing:border-box;background:#fff;border-top:1px solid #808080;border-left:1px solid #808080;border-right:1px solid #f4f4f4;border-bottom:1px solid #f4f4f4;box-shadow:inset 1px 1px #404040"></div>
<svg style="position:absolute;left:777px;top:498px" width="8" height="8" viewBox="0 0 8 8"><path d="M0.8 3.4l2 2 3.6-3.8" fill="none" stroke="#000" stroke-width="1.9"/></svg>
<div style="position:absolute;left:813px;top:488px;width:549px;height:26px;box-sizing:border-box;background:#fff;border:1px solid #282828"></div>
<div class="t" style="left:632.3px;top:519.33px;font-size:14px;font-weight:bold;color:#101010;">Repair</div>
<div style="position:absolute;left:775px;top:522px;width:11px;height:11px;box-sizing:border-box;background:#fff;border-top:1px solid #808080;border-left:1px solid #808080;border-right:1px solid #f4f4f4;border-bottom:1px solid #f4f4f4;box-shadow:inset 1px 1px #404040"></div>
<svg style="position:absolute;left:777px;top:524px" width="8" height="8" viewBox="0 0 8 8"><path d="M0.8 3.4l2 2 3.6-3.8" fill="none" stroke="#000" stroke-width="1.9"/></svg>
<div style="position:absolute;left:813px;top:514px;width:549px;height:26px;box-sizing:border-box;background:#fff;border:1px solid #282828"></div>
<div class="t" style="left:632.3px;top:545.33px;font-size:14px;font-weight:bold;color:#101010;">Inspection</div>
<div style="position:absolute;left:775px;top:548px;width:11px;height:11px;box-sizing:border-box;background:#fff;border-top:1px solid #808080;border-left:1px solid #808080;border-right:1px solid #f4f4f4;border-bottom:1px solid #f4f4f4;box-shadow:inset 1px 1px #404040"></div>
<svg style="position:absolute;left:777px;top:550px" width="8" height="8" viewBox="0 0 8 8"><path d="M0.8 3.4l2 2 3.6-3.8" fill="none" stroke="#000" stroke-width="1.9"/></svg>
<div style="position:absolute;left:813px;top:540px;width:549px;height:26px;box-sizing:border-box;background:#fff;border:1px solid #282828"></div>
<div style="position:absolute;left:631px;top:544px;width:72px;height:20px;box-sizing:border-box;border:1px dotted #000"></div>
<div class="t" style="left:630px;top:583.30px;font-size:13.7px;color:#404040;">Remarks:</div>
<div style="position:absolute;left:617px;top:599px;width:759px;height:137px;box-sizing:border-box;background:#fff;border:1px solid #282828"></div>
<div class="t" style="left:619px;top:601.42px;font-size:13.9px;font-weight:bold;color:#000080;">DC Sulpfuric acid anodizing (SAA) of aluminum alloys</div>
<svg style="position:absolute;left:660px;top:225px" width="130" height="155" viewBox="0 0 130 155">
<path d="M12.4 11.8 L107 108.5 L81 131 Z" fill="#129af5"/>
<circle cx="100.9" cy="129.9" r="19" fill="#129af5" stroke="#202020" stroke-width="1.6"/>
<circle cx="100.9" cy="129.9" r="17.6" fill="none" stroke="#d8ecf8" stroke-width="0.8"/>
<text x="101" y="136" font-family="Liberation Serif" font-weight="bold" font-size="16.5" fill="#fff" text-anchor="middle">15</text>
</svg>
</body></html>
